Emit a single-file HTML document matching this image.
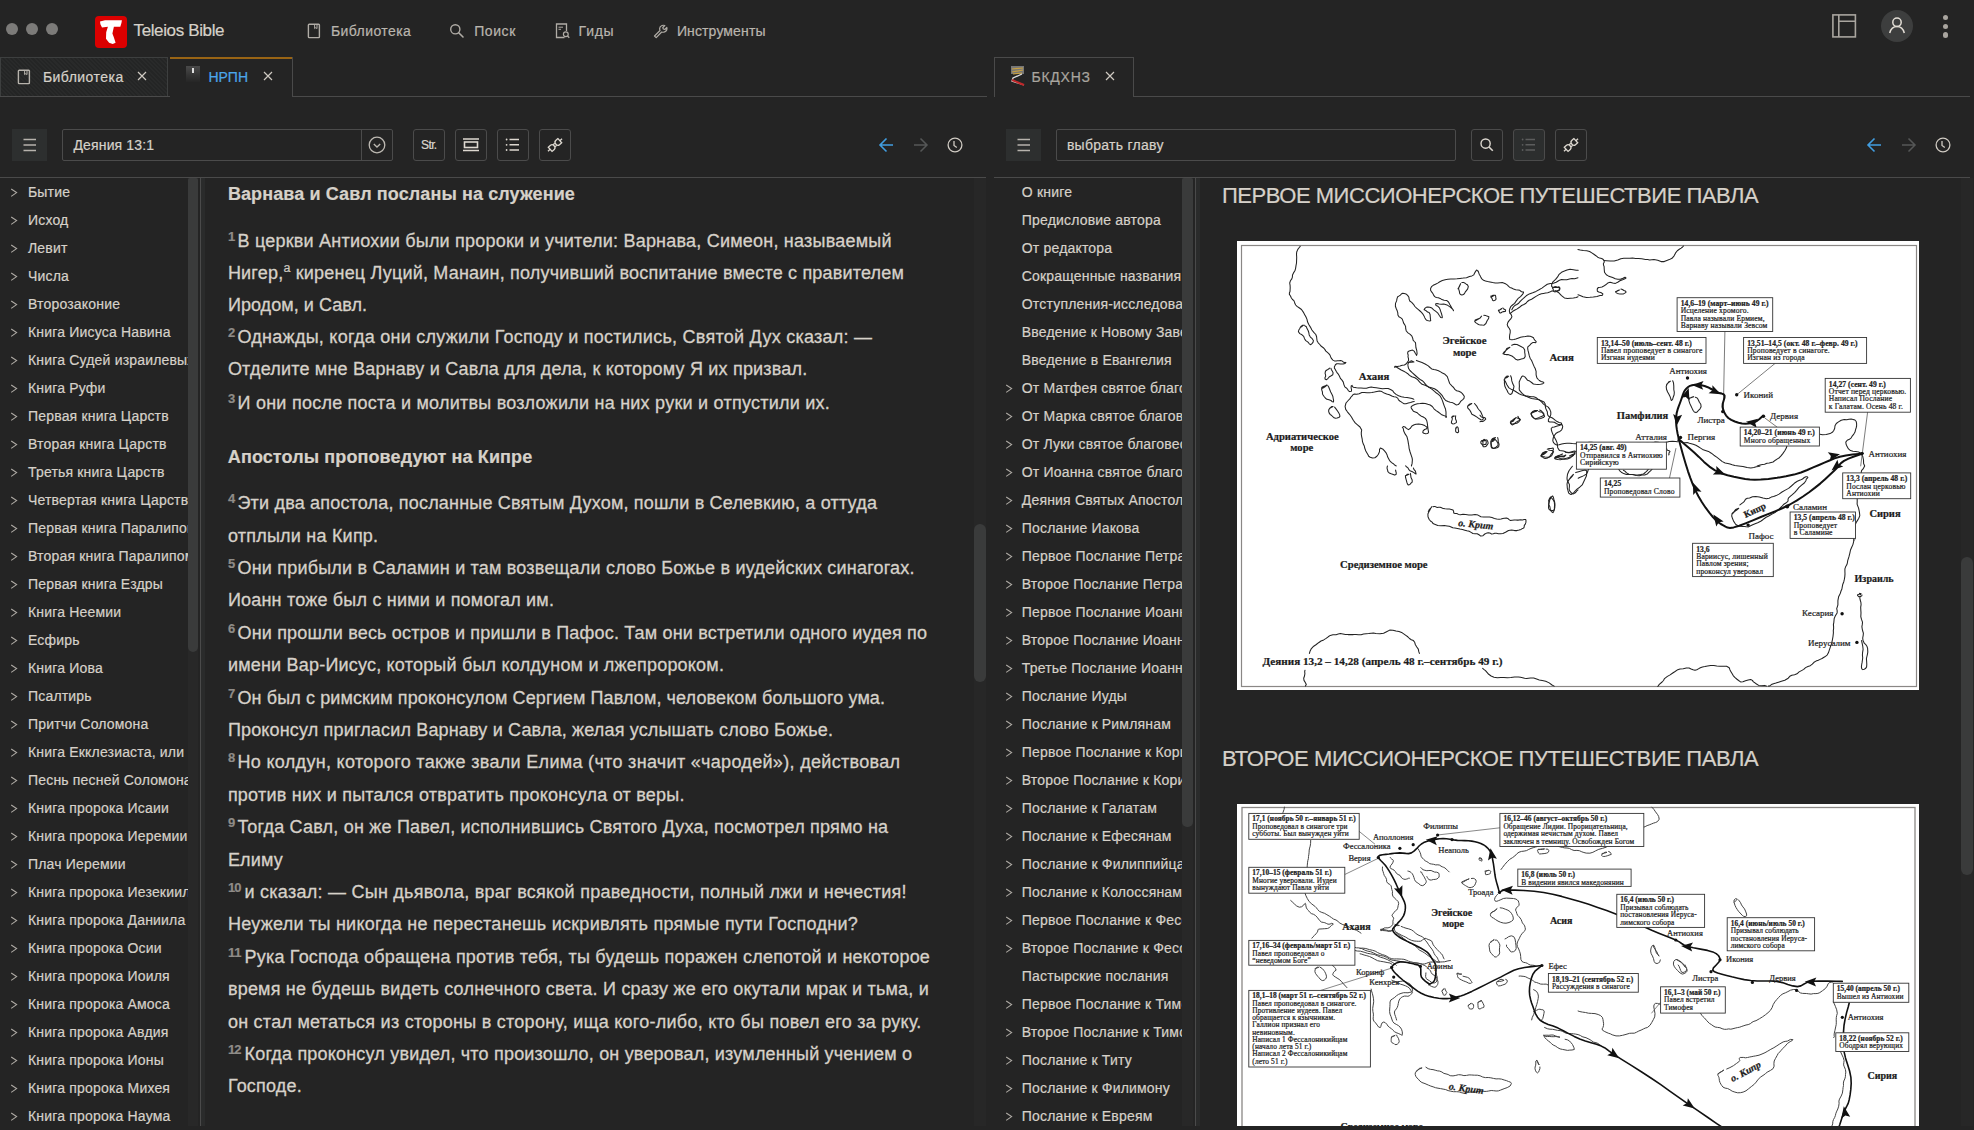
<!DOCTYPE html>
<html><head><meta charset="utf-8"><title>Teleios Bible</title>
<style>
html,body{margin:0;padding:0;width:1974px;height:1130px;overflow:hidden;background:#242424;}
body{position:relative;font-family:"Liberation Sans",sans-serif;}
.t{-webkit-text-stroke:0.2px currentColor;}
</style></head><body>
<div style="position:absolute;left:6px;top:23px;width:12px;height:12px;border-radius:50%;background:#7c7b79"></div><div style="position:absolute;left:26px;top:23px;width:12px;height:12px;border-radius:50%;background:#7c7b79"></div><div style="position:absolute;left:46px;top:23px;width:12px;height:12px;border-radius:50%;background:#7c7b79"></div><div style="position:absolute;left:95px;top:16px;width:32px;height:32px;border-radius:4px;background:#dc0000"></div>
<svg style="position:absolute;left:95px;top:16px" width="32" height="32" viewBox="0 0 32 32"><path d="M5 5.6 L10 4.3 L26.9 4.2 L26.5 6.8 L25.3 10.7 L18.9 10.7 L17.4 17.5 L18.9 21.5 L20.6 26.7 L17.7 27.9 L14.1 26.7 L11 22.7 L11.2 16.3 L12.9 10.7 L7 11.5 L5.4 8.3 Z" fill="#fff"/></svg><svg style="position:absolute;left:307px;top:23px" width="14" height="16" viewBox="0 0 14 16"><rect x="1.4" y="1.2" width="11" height="13.4" rx="0.8" fill="none" stroke="#b0aca6" stroke-width="1.4"/><path d="M7.6 1.2 V5.6 L8.8 4.6 L10 5.6 V1.2" fill="none" stroke="#b0aca6" stroke-width="1"/></svg><svg style="position:absolute;left:449px;top:23px" width="16" height="16" viewBox="0 0 16 16"><circle cx="6.3" cy="6.3" r="4.6" fill="none" stroke="#b0aca6" stroke-width="1.4"/><path d="M9.7 9.7 L14 14" stroke="#b0aca6" stroke-width="1.6" stroke-linecap="round"/></svg><svg style="position:absolute;left:555px;top:23px" width="16" height="16" viewBox="0 0 16 16"><path d="M9.5 14.5 H1.5 V1 H11.5 V8" fill="none" stroke="#b0aca6" stroke-width="1.3"/><path d="M3.5 4.2 H8 M3.5 6.3 H6" stroke="#b0aca6" stroke-width="1"/><circle cx="10.8" cy="11.3" r="2.4" fill="none" stroke="#b0aca6" stroke-width="1.2"/><path d="M12.5 13 L14.3 14.8" stroke="#b0aca6" stroke-width="1.3"/></svg><svg style="position:absolute;left:653px;top:24px" width="15" height="15" viewBox="0 0 15 15"><path d="M1.5 12 L7 6.5 C6.3 4.5 7 2.3 9 1.5 C10 1.1 11 1.2 11.8 1.5 L9.8 3.5 L10.3 5 L11.8 5.5 L13.8 3.5 C14.1 4.6 13.9 6 13 7 C12 8.1 10.3 8.5 8.7 8 L3.2 13.6 Z" fill="none" stroke="#b0aca6" stroke-width="1.2" stroke-linejoin="round"/></svg><svg style="position:absolute;left:1832px;top:14px" width="25" height="24" viewBox="0 0 25 24"><rect x="0.9" y="0.9" width="22.5" height="22" fill="none" stroke="#a9a59f" stroke-width="1.6"/><path d="M6.8 1 V23 M6.8 7.3 H23" stroke="#a9a59f" stroke-width="1.6"/></svg><div style="position:absolute;left:1881px;top:10px;width:32px;height:32px;border-radius:50%;background:#3d3e3e"></div><svg style="position:absolute;left:1881px;top:10px" width="32" height="32" viewBox="0 0 32 32"><circle cx="16" cy="12.3" r="4.2" fill="none" stroke="#e3ded6" stroke-width="1.5"/><path d="M8.7 23 C9.8 19 12.5 16.6 16 16.6 C19.5 16.6 22.2 19 23.3 23" fill="none" stroke="#e3ded6" stroke-width="1.5"/></svg><div style="position:absolute;left:1942.8000000000002px;top:15.299999999999999px;width:5.2px;height:5.2px;border-radius:50%;background:#a9a59f"></div><div style="position:absolute;left:1942.8000000000002px;top:23.9px;width:5.2px;height:5.2px;border-radius:50%;background:#a9a59f"></div><div style="position:absolute;left:1942.8000000000002px;top:32.4px;width:5.2px;height:5.2px;border-radius:50%;background:#a9a59f"></div><div style="position:absolute;left:0;top:96px;width:987px;height:1px;background:#4a4a4a"></div><div style="position:absolute;left:994px;top:96px;width:976px;height:1px;background:#4a4a4a"></div><div style="position:absolute;left:0;top:57px;width:166px;height:38px;border:1px solid #3d3f3f;border-bottom:none;background:repeating-linear-gradient(45deg,#242525 0px,#242525 1.5px,#292a2a 1.5px,#292a2a 3px)"></div><svg style="position:absolute;left:17px;top:69px" width="14" height="16" viewBox="0 0 14 16"><rect x="1.4" y="1.2" width="11" height="13.4" rx="0.8" fill="none" stroke="#b6b2ab" stroke-width="1.4"/><path d="M7.6 1.2 V5.6 L8.8 4.6 L10 5.6 V1.2" fill="none" stroke="#b6b2ab" stroke-width="1"/></svg><svg style="position:absolute;left:137px;top:71px" width="10" height="10" viewBox="0 0 10 10"><path d="M1 1 L9 9 M9 1 L1 9" stroke="#cfcac2" stroke-width="1.2"/></svg><div style="position:absolute;left:170px;top:57px;width:122px;height:40px;background:#242424;border-right:1px solid #4a4a4a"></div><div style="position:absolute;left:170px;top:57px;width:122px;height:2px;background:#996414"></div><div style="position:absolute;left:186px;top:66px;width:14px;height:16px;background:linear-gradient(#4a4a4a,#333 60%,#262626)"></div><div style="position:absolute;left:192px;top:68px;width:2px;height:5px;background:#ddd"></div><svg style="position:absolute;left:263px;top:71px" width="10" height="10" viewBox="0 0 10 10"><path d="M1 1 L9 9 M9 1 L1 9" stroke="#cfcac2" stroke-width="1.2"/></svg><div style="position:absolute;left:994px;top:57px;width:140px;height:40px;background:#242424;border:1px solid #4a4a4a;border-bottom:none;box-sizing:border-box"></div><svg style="position:absolute;left:1010px;top:65px" width="16" height="24" viewBox="0 0 16 24"><rect x="1" y="1" width="13" height="8" fill="#777"/><path d="M2 4 L13 3 M2 7 L13 5 M3 9 L12 8" stroke="#c8a040" stroke-width="1.2"/><path d="M12 9 L3 13 L2 16 L14 20" fill="none" stroke="#ddd" stroke-width="1.3"/><path d="M2 15 L14 20" stroke="#c0282a" stroke-width="2"/></svg><svg style="position:absolute;left:1105px;top:71px" width="10" height="10" viewBox="0 0 10 10"><path d="M1 1 L9 9 M9 1 L1 9" stroke="#cfcac2" stroke-width="1.2"/></svg><div style="position:absolute;left:12px;top:129px;width:35px;height:32px;background:#2d2f2f"></div><svg style="position:absolute;left:12px;top:129px" width="35" height="32" viewBox="0 0 35 32"><path d="M11.5 10.5 H24 M11.5 16 H24 M11.5 21.5 H24" stroke="#b7b3ad" stroke-width="1.5"/></svg><div style="position:absolute;left:62px;top:129px;width:331px;height:32px;border:1px solid #4b4b4b;border-radius:2px;box-sizing:border-box"></div><div style="position:absolute;left:361px;top:129px;width:1px;height:32px;background:#4b4b4b"></div><svg style="position:absolute;left:367px;top:135px" width="20" height="20" viewBox="0 0 20 20"><circle cx="10" cy="10" r="7.8" fill="none" stroke="#bdb9b2" stroke-width="1.3"/><path d="M6.8 9 L10 12 L13.2 9" fill="none" stroke="#bdb9b2" stroke-width="1.3"/></svg><div style="position:absolute;left:413px;top:129px;width:32px;height:32px;border:1px solid #4b4b4b;border-radius:3px;box-sizing:border-box;background:none"></div><div style="position:absolute;left:455px;top:129px;width:32px;height:32px;border:1px solid #4b4b4b;border-radius:3px;box-sizing:border-box;background:none"></div><div style="position:absolute;left:497px;top:129px;width:32px;height:32px;border:1px solid #4b4b4b;border-radius:3px;box-sizing:border-box;background:none"></div><div style="position:absolute;left:539px;top:129px;width:32px;height:32px;border:1px solid #4b4b4b;border-radius:3px;box-sizing:border-box;background:none"></div><svg style="position:absolute;left:455px;top:129px" width="32" height="32" viewBox="0 0 32 32"><path d="M8 10 H24 M8 21.5 H24" stroke="#ddd8d0" stroke-width="1.5"/><rect x="9.5" y="13" width="13" height="5.5" fill="none" stroke="#ddd8d0" stroke-width="1.6"/></svg><svg style="position:absolute;left:497px;top:129px" width="32" height="32" viewBox="0 0 32 32"><path d="M12.5 10.5 H22 M12.5 15.8 H22 M12.5 21 H22" stroke="#ddd8d0" stroke-width="1.4"/><circle cx="9.6" cy="10.5" r="0.9" fill="#ddd8d0"/><circle cx="9.6" cy="15.8" r="0.9" fill="#ddd8d0"/><circle cx="9.6" cy="21" r="0.9" fill="#ddd8d0"/></svg><svg style="position:absolute;left:539px;top:129px" width="32" height="32" viewBox="0 0 32 32"><g fill="none" stroke="#ddd8d0" stroke-width="1.3" transform="rotate(-42 16 16)"><path d="M6.5 16 H9.5"/><path d="M9.5 13.2 H12.5 C14 13.2 14.8 14.5 14.8 16 C14.8 17.5 14 18.8 12.5 18.8 H9.5 Z"/><path d="M14.8 14.6 H17 M14.8 17.4 H17"/><path d="M22.5 13.2 H19.5 C18 13.2 17.2 14.5 17.2 16 C17.2 17.5 18 18.8 19.5 18.8 H22.5 Z"/><path d="M22.5 16 H25.5"/></g></svg><svg style="position:absolute;left:878px;top:137px" width="16" height="16" viewBox="0 0 16 16"><path d="M15 8 H2 M8.5 1.5 L2 8 L8.5 14.5" fill="none" stroke="#419de0" stroke-width="1.6"/></svg><svg style="position:absolute;left:913px;top:137px" width="16" height="16" viewBox="0 0 16 16"><path d="M1 8 H14 M7.5 1.5 L14 8 L7.5 14.5" fill="none" stroke="#555757" stroke-width="1.5"/></svg><svg style="position:absolute;left:947px;top:137px" width="16" height="16" viewBox="0 0 16 16"><circle cx="8" cy="8" r="6.9" fill="none" stroke="#cfcac2" stroke-width="1.3"/><path d="M7 4 V8.4 L9.8 10.6" fill="none" stroke="#cfcac2" stroke-width="1.3"/></svg><div style="position:absolute;left:0;top:177px;width:986px;height:1px;background:#4a4a4a"></div><div style="position:absolute;left:1006px;top:129px;width:35px;height:32px;background:#2d2f2f"></div><svg style="position:absolute;left:1006px;top:129px" width="35" height="32" viewBox="0 0 35 32"><path d="M11.5 10.5 H24 M11.5 16 H24 M11.5 21.5 H24" stroke="#b7b3ad" stroke-width="1.5"/></svg><div style="position:absolute;left:1056px;top:129px;width:400px;height:32px;border:1px solid #4b4b4b;border-radius:2px;box-sizing:border-box"></div><div style="position:absolute;left:1471px;top:129px;width:32px;height:32px;border:1px solid #4b4b4b;border-radius:3px;box-sizing:border-box;background:none"></div><svg style="position:absolute;left:1471px;top:129px" width="32" height="32" viewBox="0 0 32 32"><circle cx="14.6" cy="14.6" r="4.6" fill="none" stroke="#ddd8d0" stroke-width="1.4"/><path d="M18 18 L21.8 21.8" stroke="#ddd8d0" stroke-width="1.6"/></svg><div style="position:absolute;left:1513px;top:129px;width:32px;height:32px;border:1px solid #4b4b4b;border-radius:3px;box-sizing:border-box;background:#2c2e2e"></div><svg style="position:absolute;left:1513px;top:129px" width="32" height="32" viewBox="0 0 32 32"><path d="M12.5 10.5 H22 M12.5 15.8 H22 M12.5 21 H22" stroke="#5c5d5d" stroke-width="1.4"/><circle cx="9.6" cy="10.5" r="0.9" fill="#5c5d5d"/><circle cx="9.6" cy="15.8" r="0.9" fill="#5c5d5d"/><circle cx="9.6" cy="21" r="0.9" fill="#5c5d5d"/></svg><div style="position:absolute;left:1555px;top:129px;width:32px;height:32px;border:1px solid #4b4b4b;border-radius:3px;box-sizing:border-box;background:none"></div><svg style="position:absolute;left:1555px;top:129px" width="32" height="32" viewBox="0 0 32 32"><g fill="none" stroke="#ddd8d0" stroke-width="1.3" transform="rotate(-42 16 16)"><path d="M6.5 16 H9.5"/><path d="M9.5 13.2 H12.5 C14 13.2 14.8 14.5 14.8 16 C14.8 17.5 14 18.8 12.5 18.8 H9.5 Z"/><path d="M14.8 14.6 H17 M14.8 17.4 H17"/><path d="M22.5 13.2 H19.5 C18 13.2 17.2 14.5 17.2 16 C17.2 17.5 18 18.8 19.5 18.8 H22.5 Z"/><path d="M22.5 16 H25.5"/></g></svg><svg style="position:absolute;left:1866px;top:137px" width="16" height="16" viewBox="0 0 16 16"><path d="M15 8 H2 M8.5 1.5 L2 8 L8.5 14.5" fill="none" stroke="#419de0" stroke-width="1.6"/></svg><svg style="position:absolute;left:1901px;top:137px" width="16" height="16" viewBox="0 0 16 16"><path d="M1 8 H14 M7.5 1.5 L14 8 L7.5 14.5" fill="none" stroke="#555757" stroke-width="1.5"/></svg><svg style="position:absolute;left:1935px;top:137px" width="16" height="16" viewBox="0 0 16 16"><circle cx="8" cy="8" r="6.9" fill="none" stroke="#cfcac2" stroke-width="1.3"/><path d="M7 4 V8.4 L9.8 10.6" fill="none" stroke="#cfcac2" stroke-width="1.3"/></svg><div style="position:absolute;left:994px;top:177px;width:976px;height:1px;background:#4a4a4a"></div><div style="position:absolute;left:0;top:178px;width:188px;height:948px;overflow:hidden"><svg style="position:absolute;left:9.7px;top:10.299999999999988px" width="8" height="10" viewBox="0 0 8 10"><path d="M1.2 1 L6.6 4.6 L1.2 8.4" fill="none" stroke="#aeaaa4" stroke-width="1.1"/></svg><svg style="position:absolute;left:9.7px;top:38.29999999999999px" width="8" height="10" viewBox="0 0 8 10"><path d="M1.2 1 L6.6 4.6 L1.2 8.4" fill="none" stroke="#aeaaa4" stroke-width="1.1"/></svg><svg style="position:absolute;left:9.7px;top:66.29999999999998px" width="8" height="10" viewBox="0 0 8 10"><path d="M1.2 1 L6.6 4.6 L1.2 8.4" fill="none" stroke="#aeaaa4" stroke-width="1.1"/></svg><svg style="position:absolute;left:9.7px;top:94.29999999999998px" width="8" height="10" viewBox="0 0 8 10"><path d="M1.2 1 L6.6 4.6 L1.2 8.4" fill="none" stroke="#aeaaa4" stroke-width="1.1"/></svg><svg style="position:absolute;left:9.7px;top:122.29999999999998px" width="8" height="10" viewBox="0 0 8 10"><path d="M1.2 1 L6.6 4.6 L1.2 8.4" fill="none" stroke="#aeaaa4" stroke-width="1.1"/></svg><svg style="position:absolute;left:9.7px;top:150.29999999999998px" width="8" height="10" viewBox="0 0 8 10"><path d="M1.2 1 L6.6 4.6 L1.2 8.4" fill="none" stroke="#aeaaa4" stroke-width="1.1"/></svg><svg style="position:absolute;left:9.7px;top:178.29999999999998px" width="8" height="10" viewBox="0 0 8 10"><path d="M1.2 1 L6.6 4.6 L1.2 8.4" fill="none" stroke="#aeaaa4" stroke-width="1.1"/></svg><svg style="position:absolute;left:9.7px;top:206.29999999999998px" width="8" height="10" viewBox="0 0 8 10"><path d="M1.2 1 L6.6 4.6 L1.2 8.4" fill="none" stroke="#aeaaa4" stroke-width="1.1"/></svg><svg style="position:absolute;left:9.7px;top:234.29999999999998px" width="8" height="10" viewBox="0 0 8 10"><path d="M1.2 1 L6.6 4.6 L1.2 8.4" fill="none" stroke="#aeaaa4" stroke-width="1.1"/></svg><svg style="position:absolute;left:9.7px;top:262.3px" width="8" height="10" viewBox="0 0 8 10"><path d="M1.2 1 L6.6 4.6 L1.2 8.4" fill="none" stroke="#aeaaa4" stroke-width="1.1"/></svg><svg style="position:absolute;left:9.7px;top:290.3px" width="8" height="10" viewBox="0 0 8 10"><path d="M1.2 1 L6.6 4.6 L1.2 8.4" fill="none" stroke="#aeaaa4" stroke-width="1.1"/></svg><svg style="position:absolute;left:9.7px;top:318.3px" width="8" height="10" viewBox="0 0 8 10"><path d="M1.2 1 L6.6 4.6 L1.2 8.4" fill="none" stroke="#aeaaa4" stroke-width="1.1"/></svg><svg style="position:absolute;left:9.7px;top:346.30000000000007px" width="8" height="10" viewBox="0 0 8 10"><path d="M1.2 1 L6.6 4.6 L1.2 8.4" fill="none" stroke="#aeaaa4" stroke-width="1.1"/></svg><svg style="position:absolute;left:9.7px;top:374.30000000000007px" width="8" height="10" viewBox="0 0 8 10"><path d="M1.2 1 L6.6 4.6 L1.2 8.4" fill="none" stroke="#aeaaa4" stroke-width="1.1"/></svg><svg style="position:absolute;left:9.7px;top:402.30000000000007px" width="8" height="10" viewBox="0 0 8 10"><path d="M1.2 1 L6.6 4.6 L1.2 8.4" fill="none" stroke="#aeaaa4" stroke-width="1.1"/></svg><svg style="position:absolute;left:9.7px;top:430.30000000000007px" width="8" height="10" viewBox="0 0 8 10"><path d="M1.2 1 L6.6 4.6 L1.2 8.4" fill="none" stroke="#aeaaa4" stroke-width="1.1"/></svg><svg style="position:absolute;left:9.7px;top:458.30000000000007px" width="8" height="10" viewBox="0 0 8 10"><path d="M1.2 1 L6.6 4.6 L1.2 8.4" fill="none" stroke="#aeaaa4" stroke-width="1.1"/></svg><svg style="position:absolute;left:9.7px;top:486.30000000000007px" width="8" height="10" viewBox="0 0 8 10"><path d="M1.2 1 L6.6 4.6 L1.2 8.4" fill="none" stroke="#aeaaa4" stroke-width="1.1"/></svg><svg style="position:absolute;left:9.7px;top:514.3000000000001px" width="8" height="10" viewBox="0 0 8 10"><path d="M1.2 1 L6.6 4.6 L1.2 8.4" fill="none" stroke="#aeaaa4" stroke-width="1.1"/></svg><svg style="position:absolute;left:9.7px;top:542.3000000000001px" width="8" height="10" viewBox="0 0 8 10"><path d="M1.2 1 L6.6 4.6 L1.2 8.4" fill="none" stroke="#aeaaa4" stroke-width="1.1"/></svg><svg style="position:absolute;left:9.7px;top:570.3000000000001px" width="8" height="10" viewBox="0 0 8 10"><path d="M1.2 1 L6.6 4.6 L1.2 8.4" fill="none" stroke="#aeaaa4" stroke-width="1.1"/></svg><svg style="position:absolute;left:9.7px;top:598.3000000000001px" width="8" height="10" viewBox="0 0 8 10"><path d="M1.2 1 L6.6 4.6 L1.2 8.4" fill="none" stroke="#aeaaa4" stroke-width="1.1"/></svg><svg style="position:absolute;left:9.7px;top:626.3000000000001px" width="8" height="10" viewBox="0 0 8 10"><path d="M1.2 1 L6.6 4.6 L1.2 8.4" fill="none" stroke="#aeaaa4" stroke-width="1.1"/></svg><svg style="position:absolute;left:9.7px;top:654.3000000000001px" width="8" height="10" viewBox="0 0 8 10"><path d="M1.2 1 L6.6 4.6 L1.2 8.4" fill="none" stroke="#aeaaa4" stroke-width="1.1"/></svg><svg style="position:absolute;left:9.7px;top:682.3000000000001px" width="8" height="10" viewBox="0 0 8 10"><path d="M1.2 1 L6.6 4.6 L1.2 8.4" fill="none" stroke="#aeaaa4" stroke-width="1.1"/></svg><svg style="position:absolute;left:9.7px;top:710.3000000000001px" width="8" height="10" viewBox="0 0 8 10"><path d="M1.2 1 L6.6 4.6 L1.2 8.4" fill="none" stroke="#aeaaa4" stroke-width="1.1"/></svg><svg style="position:absolute;left:9.7px;top:738.3000000000001px" width="8" height="10" viewBox="0 0 8 10"><path d="M1.2 1 L6.6 4.6 L1.2 8.4" fill="none" stroke="#aeaaa4" stroke-width="1.1"/></svg><svg style="position:absolute;left:9.7px;top:766.3000000000001px" width="8" height="10" viewBox="0 0 8 10"><path d="M1.2 1 L6.6 4.6 L1.2 8.4" fill="none" stroke="#aeaaa4" stroke-width="1.1"/></svg><svg style="position:absolute;left:9.7px;top:794.3000000000001px" width="8" height="10" viewBox="0 0 8 10"><path d="M1.2 1 L6.6 4.6 L1.2 8.4" fill="none" stroke="#aeaaa4" stroke-width="1.1"/></svg><svg style="position:absolute;left:9.7px;top:822.3000000000001px" width="8" height="10" viewBox="0 0 8 10"><path d="M1.2 1 L6.6 4.6 L1.2 8.4" fill="none" stroke="#aeaaa4" stroke-width="1.1"/></svg><svg style="position:absolute;left:9.7px;top:850.3000000000001px" width="8" height="10" viewBox="0 0 8 10"><path d="M1.2 1 L6.6 4.6 L1.2 8.4" fill="none" stroke="#aeaaa4" stroke-width="1.1"/></svg><svg style="position:absolute;left:9.7px;top:878.3000000000001px" width="8" height="10" viewBox="0 0 8 10"><path d="M1.2 1 L6.6 4.6 L1.2 8.4" fill="none" stroke="#aeaaa4" stroke-width="1.1"/></svg><svg style="position:absolute;left:9.7px;top:906.3000000000001px" width="8" height="10" viewBox="0 0 8 10"><path d="M1.2 1 L6.6 4.6 L1.2 8.4" fill="none" stroke="#aeaaa4" stroke-width="1.1"/></svg><svg style="position:absolute;left:9.7px;top:934.3000000000001px" width="8" height="10" viewBox="0 0 8 10"><path d="M1.2 1 L6.6 4.6 L1.2 8.4" fill="none" stroke="#aeaaa4" stroke-width="1.1"/></svg><div class="t" style="position:absolute;left:28.00px;top:6.83px;font-size:14px;line-height:15.64px;color:#d6d1c9;font-weight:400;letter-spacing:0.180px;white-space:pre;">Бытие</div><div class="t" style="position:absolute;left:28.00px;top:34.83px;font-size:14px;line-height:15.64px;color:#d6d1c9;font-weight:400;letter-spacing:0.180px;white-space:pre;">Исход</div><div class="t" style="position:absolute;left:28.00px;top:62.83px;font-size:14px;line-height:15.64px;color:#d6d1c9;font-weight:400;letter-spacing:0.180px;white-space:pre;">Левит</div><div class="t" style="position:absolute;left:28.00px;top:90.83px;font-size:14px;line-height:15.64px;color:#d6d1c9;font-weight:400;letter-spacing:0.180px;white-space:pre;">Числа</div><div class="t" style="position:absolute;left:28.00px;top:118.83px;font-size:14px;line-height:15.64px;color:#d6d1c9;font-weight:400;letter-spacing:0.180px;white-space:pre;">Второзаконие</div><div class="t" style="position:absolute;left:28.00px;top:146.83px;font-size:14px;line-height:15.64px;color:#d6d1c9;font-weight:400;letter-spacing:0.180px;white-space:pre;">Книга Иисуса Навина</div><div class="t" style="position:absolute;left:28.00px;top:174.83px;font-size:14px;line-height:15.64px;color:#d6d1c9;font-weight:400;letter-spacing:0.180px;white-space:pre;">Книга Судей израилевых</div><div class="t" style="position:absolute;left:28.00px;top:202.83px;font-size:14px;line-height:15.64px;color:#d6d1c9;font-weight:400;letter-spacing:0.180px;white-space:pre;">Книга Руфи</div><div class="t" style="position:absolute;left:28.00px;top:230.83px;font-size:14px;line-height:15.64px;color:#d6d1c9;font-weight:400;letter-spacing:0.180px;white-space:pre;">Первая книга Царств</div><div class="t" style="position:absolute;left:28.00px;top:258.83px;font-size:14px;line-height:15.64px;color:#d6d1c9;font-weight:400;letter-spacing:0.180px;white-space:pre;">Вторая книга Царств</div><div class="t" style="position:absolute;left:28.00px;top:286.83px;font-size:14px;line-height:15.64px;color:#d6d1c9;font-weight:400;letter-spacing:0.180px;white-space:pre;">Третья книга Царств</div><div class="t" style="position:absolute;left:28.00px;top:314.83px;font-size:14px;line-height:15.64px;color:#d6d1c9;font-weight:400;letter-spacing:0.180px;white-space:pre;">Четвертая книга Царств</div><div class="t" style="position:absolute;left:28.00px;top:342.83px;font-size:14px;line-height:15.64px;color:#d6d1c9;font-weight:400;letter-spacing:0.180px;white-space:pre;">Первая книга Паралипоменон</div><div class="t" style="position:absolute;left:28.00px;top:370.83px;font-size:14px;line-height:15.64px;color:#d6d1c9;font-weight:400;letter-spacing:0.180px;white-space:pre;">Вторая книга Паралипоменон</div><div class="t" style="position:absolute;left:28.00px;top:398.83px;font-size:14px;line-height:15.64px;color:#d6d1c9;font-weight:400;letter-spacing:0.180px;white-space:pre;">Первая книга Ездры</div><div class="t" style="position:absolute;left:28.00px;top:426.83px;font-size:14px;line-height:15.64px;color:#d6d1c9;font-weight:400;letter-spacing:0.180px;white-space:pre;">Книга Неемии</div><div class="t" style="position:absolute;left:28.00px;top:454.83px;font-size:14px;line-height:15.64px;color:#d6d1c9;font-weight:400;letter-spacing:0.180px;white-space:pre;">Есфирь</div><div class="t" style="position:absolute;left:28.00px;top:482.83px;font-size:14px;line-height:15.64px;color:#d6d1c9;font-weight:400;letter-spacing:0.180px;white-space:pre;">Книга Иова</div><div class="t" style="position:absolute;left:28.00px;top:510.83px;font-size:14px;line-height:15.64px;color:#d6d1c9;font-weight:400;letter-spacing:0.180px;white-space:pre;">Псалтирь</div><div class="t" style="position:absolute;left:28.00px;top:538.83px;font-size:14px;line-height:15.64px;color:#d6d1c9;font-weight:400;letter-spacing:0.180px;white-space:pre;">Притчи Соломона</div><div class="t" style="position:absolute;left:28.00px;top:566.83px;font-size:14px;line-height:15.64px;color:#d6d1c9;font-weight:400;letter-spacing:0.180px;white-space:pre;">Книга Екклезиаста, или Проповедника</div><div class="t" style="position:absolute;left:28.00px;top:594.83px;font-size:14px;line-height:15.64px;color:#d6d1c9;font-weight:400;letter-spacing:0.180px;white-space:pre;">Песнь песней Соломона</div><div class="t" style="position:absolute;left:28.00px;top:622.83px;font-size:14px;line-height:15.64px;color:#d6d1c9;font-weight:400;letter-spacing:0.180px;white-space:pre;">Книга пророка Исаии</div><div class="t" style="position:absolute;left:28.00px;top:650.83px;font-size:14px;line-height:15.64px;color:#d6d1c9;font-weight:400;letter-spacing:0.180px;white-space:pre;">Книга пророка Иеремии</div><div class="t" style="position:absolute;left:28.00px;top:678.83px;font-size:14px;line-height:15.64px;color:#d6d1c9;font-weight:400;letter-spacing:0.180px;white-space:pre;">Плач Иеремии</div><div class="t" style="position:absolute;left:28.00px;top:706.83px;font-size:14px;line-height:15.64px;color:#d6d1c9;font-weight:400;letter-spacing:0.180px;white-space:pre;">Книга пророка Иезекииля</div><div class="t" style="position:absolute;left:28.00px;top:734.83px;font-size:14px;line-height:15.64px;color:#d6d1c9;font-weight:400;letter-spacing:0.180px;white-space:pre;">Книга пророка Даниила</div><div class="t" style="position:absolute;left:28.00px;top:762.83px;font-size:14px;line-height:15.64px;color:#d6d1c9;font-weight:400;letter-spacing:0.180px;white-space:pre;">Книга пророка Осии</div><div class="t" style="position:absolute;left:28.00px;top:790.83px;font-size:14px;line-height:15.64px;color:#d6d1c9;font-weight:400;letter-spacing:0.180px;white-space:pre;">Книга пророка Иоиля</div><div class="t" style="position:absolute;left:28.00px;top:818.83px;font-size:14px;line-height:15.64px;color:#d6d1c9;font-weight:400;letter-spacing:0.180px;white-space:pre;">Книга пророка Амоса</div><div class="t" style="position:absolute;left:28.00px;top:846.83px;font-size:14px;line-height:15.64px;color:#d6d1c9;font-weight:400;letter-spacing:0.180px;white-space:pre;">Книга пророка Авдия</div><div class="t" style="position:absolute;left:28.00px;top:874.83px;font-size:14px;line-height:15.64px;color:#d6d1c9;font-weight:400;letter-spacing:0.180px;white-space:pre;">Книга пророка Ионы</div><div class="t" style="position:absolute;left:28.00px;top:902.83px;font-size:14px;line-height:15.64px;color:#d6d1c9;font-weight:400;letter-spacing:0.180px;white-space:pre;">Книга пророка Михея</div><div class="t" style="position:absolute;left:28.00px;top:930.83px;font-size:14px;line-height:15.64px;color:#d6d1c9;font-weight:400;letter-spacing:0.180px;white-space:pre;">Книга пророка Наума</div></div><div style="position:absolute;left:188px;top:178px;width:10px;height:948px;background:#282828"></div><div style="position:absolute;left:188px;top:178px;width:10px;height:474px;border-radius:2px 2px 5px 5px;background:#3a3b3b"></div><div style="position:absolute;left:200px;top:178px;width:1px;height:948px;background:#4a4a4a"></div><div style="position:absolute;left:201px;top:178px;width:4px;height:948px;background:#2a2b2b"></div><div style="position:absolute;left:974px;top:178px;width:12px;height:948px;background:#272727"></div><div style="position:absolute;left:974px;top:524px;width:12px;height:158px;border-radius:6px;background:#3a3b3b"></div><div style="position:absolute;left:994px;top:178px;width:188px;height:948px;overflow:hidden"><svg style="position:absolute;left:10.7px;top:206.29999999999998px" width="8" height="10" viewBox="0 0 8 10"><path d="M1.2 1 L6.6 4.6 L1.2 8.4" fill="none" stroke="#aeaaa4" stroke-width="1.1"/></svg><svg style="position:absolute;left:10.7px;top:234.29999999999998px" width="8" height="10" viewBox="0 0 8 10"><path d="M1.2 1 L6.6 4.6 L1.2 8.4" fill="none" stroke="#aeaaa4" stroke-width="1.1"/></svg><svg style="position:absolute;left:10.7px;top:262.3px" width="8" height="10" viewBox="0 0 8 10"><path d="M1.2 1 L6.6 4.6 L1.2 8.4" fill="none" stroke="#aeaaa4" stroke-width="1.1"/></svg><svg style="position:absolute;left:10.7px;top:290.3px" width="8" height="10" viewBox="0 0 8 10"><path d="M1.2 1 L6.6 4.6 L1.2 8.4" fill="none" stroke="#aeaaa4" stroke-width="1.1"/></svg><svg style="position:absolute;left:10.7px;top:318.3px" width="8" height="10" viewBox="0 0 8 10"><path d="M1.2 1 L6.6 4.6 L1.2 8.4" fill="none" stroke="#aeaaa4" stroke-width="1.1"/></svg><svg style="position:absolute;left:10.7px;top:346.30000000000007px" width="8" height="10" viewBox="0 0 8 10"><path d="M1.2 1 L6.6 4.6 L1.2 8.4" fill="none" stroke="#aeaaa4" stroke-width="1.1"/></svg><svg style="position:absolute;left:10.7px;top:374.30000000000007px" width="8" height="10" viewBox="0 0 8 10"><path d="M1.2 1 L6.6 4.6 L1.2 8.4" fill="none" stroke="#aeaaa4" stroke-width="1.1"/></svg><svg style="position:absolute;left:10.7px;top:402.30000000000007px" width="8" height="10" viewBox="0 0 8 10"><path d="M1.2 1 L6.6 4.6 L1.2 8.4" fill="none" stroke="#aeaaa4" stroke-width="1.1"/></svg><svg style="position:absolute;left:10.7px;top:430.30000000000007px" width="8" height="10" viewBox="0 0 8 10"><path d="M1.2 1 L6.6 4.6 L1.2 8.4" fill="none" stroke="#aeaaa4" stroke-width="1.1"/></svg><svg style="position:absolute;left:10.7px;top:458.30000000000007px" width="8" height="10" viewBox="0 0 8 10"><path d="M1.2 1 L6.6 4.6 L1.2 8.4" fill="none" stroke="#aeaaa4" stroke-width="1.1"/></svg><svg style="position:absolute;left:10.7px;top:486.30000000000007px" width="8" height="10" viewBox="0 0 8 10"><path d="M1.2 1 L6.6 4.6 L1.2 8.4" fill="none" stroke="#aeaaa4" stroke-width="1.1"/></svg><svg style="position:absolute;left:10.7px;top:514.3000000000001px" width="8" height="10" viewBox="0 0 8 10"><path d="M1.2 1 L6.6 4.6 L1.2 8.4" fill="none" stroke="#aeaaa4" stroke-width="1.1"/></svg><svg style="position:absolute;left:10.7px;top:542.3000000000001px" width="8" height="10" viewBox="0 0 8 10"><path d="M1.2 1 L6.6 4.6 L1.2 8.4" fill="none" stroke="#aeaaa4" stroke-width="1.1"/></svg><svg style="position:absolute;left:10.7px;top:570.3000000000001px" width="8" height="10" viewBox="0 0 8 10"><path d="M1.2 1 L6.6 4.6 L1.2 8.4" fill="none" stroke="#aeaaa4" stroke-width="1.1"/></svg><svg style="position:absolute;left:10.7px;top:598.3000000000001px" width="8" height="10" viewBox="0 0 8 10"><path d="M1.2 1 L6.6 4.6 L1.2 8.4" fill="none" stroke="#aeaaa4" stroke-width="1.1"/></svg><svg style="position:absolute;left:10.7px;top:626.3000000000001px" width="8" height="10" viewBox="0 0 8 10"><path d="M1.2 1 L6.6 4.6 L1.2 8.4" fill="none" stroke="#aeaaa4" stroke-width="1.1"/></svg><svg style="position:absolute;left:10.7px;top:654.3000000000001px" width="8" height="10" viewBox="0 0 8 10"><path d="M1.2 1 L6.6 4.6 L1.2 8.4" fill="none" stroke="#aeaaa4" stroke-width="1.1"/></svg><svg style="position:absolute;left:10.7px;top:682.3000000000001px" width="8" height="10" viewBox="0 0 8 10"><path d="M1.2 1 L6.6 4.6 L1.2 8.4" fill="none" stroke="#aeaaa4" stroke-width="1.1"/></svg><svg style="position:absolute;left:10.7px;top:710.3000000000001px" width="8" height="10" viewBox="0 0 8 10"><path d="M1.2 1 L6.6 4.6 L1.2 8.4" fill="none" stroke="#aeaaa4" stroke-width="1.1"/></svg><svg style="position:absolute;left:10.7px;top:738.3000000000001px" width="8" height="10" viewBox="0 0 8 10"><path d="M1.2 1 L6.6 4.6 L1.2 8.4" fill="none" stroke="#aeaaa4" stroke-width="1.1"/></svg><svg style="position:absolute;left:10.7px;top:766.3000000000001px" width="8" height="10" viewBox="0 0 8 10"><path d="M1.2 1 L6.6 4.6 L1.2 8.4" fill="none" stroke="#aeaaa4" stroke-width="1.1"/></svg><svg style="position:absolute;left:10.7px;top:822.3000000000001px" width="8" height="10" viewBox="0 0 8 10"><path d="M1.2 1 L6.6 4.6 L1.2 8.4" fill="none" stroke="#aeaaa4" stroke-width="1.1"/></svg><svg style="position:absolute;left:10.7px;top:850.3000000000001px" width="8" height="10" viewBox="0 0 8 10"><path d="M1.2 1 L6.6 4.6 L1.2 8.4" fill="none" stroke="#aeaaa4" stroke-width="1.1"/></svg><svg style="position:absolute;left:10.7px;top:878.3000000000001px" width="8" height="10" viewBox="0 0 8 10"><path d="M1.2 1 L6.6 4.6 L1.2 8.4" fill="none" stroke="#aeaaa4" stroke-width="1.1"/></svg><svg style="position:absolute;left:10.7px;top:906.3000000000001px" width="8" height="10" viewBox="0 0 8 10"><path d="M1.2 1 L6.6 4.6 L1.2 8.4" fill="none" stroke="#aeaaa4" stroke-width="1.1"/></svg><svg style="position:absolute;left:10.7px;top:934.3000000000001px" width="8" height="10" viewBox="0 0 8 10"><path d="M1.2 1 L6.6 4.6 L1.2 8.4" fill="none" stroke="#aeaaa4" stroke-width="1.1"/></svg><div class="t" style="position:absolute;left:27.80px;top:6.83px;font-size:14px;line-height:15.64px;color:#d6d1c9;font-weight:400;letter-spacing:0.180px;white-space:pre;">О книге</div><div class="t" style="position:absolute;left:27.80px;top:34.83px;font-size:14px;line-height:15.64px;color:#d6d1c9;font-weight:400;letter-spacing:0.180px;white-space:pre;">Предисловие автора</div><div class="t" style="position:absolute;left:27.80px;top:62.83px;font-size:14px;line-height:15.64px;color:#d6d1c9;font-weight:400;letter-spacing:0.180px;white-space:pre;">От редактора</div><div class="t" style="position:absolute;left:27.80px;top:90.83px;font-size:14px;line-height:15.64px;color:#d6d1c9;font-weight:400;letter-spacing:0.180px;white-space:pre;">Сокращенные названия</div><div class="t" style="position:absolute;left:27.80px;top:118.83px;font-size:14px;line-height:15.64px;color:#d6d1c9;font-weight:400;letter-spacing:0.180px;white-space:pre;">Отступления-исследования</div><div class="t" style="position:absolute;left:27.80px;top:146.83px;font-size:14px;line-height:15.64px;color:#d6d1c9;font-weight:400;letter-spacing:0.180px;white-space:pre;">Введение к Новому Завету</div><div class="t" style="position:absolute;left:27.80px;top:174.83px;font-size:14px;line-height:15.64px;color:#d6d1c9;font-weight:400;letter-spacing:0.180px;white-space:pre;">Введение в Евангелия</div><div class="t" style="position:absolute;left:27.80px;top:202.83px;font-size:14px;line-height:15.64px;color:#d6d1c9;font-weight:400;letter-spacing:0.180px;white-space:pre;">От Матфея святое благовествование</div><div class="t" style="position:absolute;left:27.80px;top:230.83px;font-size:14px;line-height:15.64px;color:#d6d1c9;font-weight:400;letter-spacing:0.180px;white-space:pre;">От Марка святое благовествование</div><div class="t" style="position:absolute;left:27.80px;top:258.83px;font-size:14px;line-height:15.64px;color:#d6d1c9;font-weight:400;letter-spacing:0.180px;white-space:pre;">От Луки святое благовествование</div><div class="t" style="position:absolute;left:27.80px;top:286.83px;font-size:14px;line-height:15.64px;color:#d6d1c9;font-weight:400;letter-spacing:0.180px;white-space:pre;">От Иоанна святое благовествование</div><div class="t" style="position:absolute;left:27.80px;top:314.83px;font-size:14px;line-height:15.64px;color:#d6d1c9;font-weight:400;letter-spacing:0.180px;white-space:pre;">Деяния Святых Апостолов</div><div class="t" style="position:absolute;left:27.80px;top:342.83px;font-size:14px;line-height:15.64px;color:#d6d1c9;font-weight:400;letter-spacing:0.180px;white-space:pre;">Послание Иакова</div><div class="t" style="position:absolute;left:27.80px;top:370.83px;font-size:14px;line-height:15.64px;color:#d6d1c9;font-weight:400;letter-spacing:0.180px;white-space:pre;">Первое Послание Петра</div><div class="t" style="position:absolute;left:27.80px;top:398.83px;font-size:14px;line-height:15.64px;color:#d6d1c9;font-weight:400;letter-spacing:0.180px;white-space:pre;">Второе Послание Петра</div><div class="t" style="position:absolute;left:27.80px;top:426.83px;font-size:14px;line-height:15.64px;color:#d6d1c9;font-weight:400;letter-spacing:0.180px;white-space:pre;">Первое Послание Иоанна</div><div class="t" style="position:absolute;left:27.80px;top:454.83px;font-size:14px;line-height:15.64px;color:#d6d1c9;font-weight:400;letter-spacing:0.180px;white-space:pre;">Второе Послание Иоанна</div><div class="t" style="position:absolute;left:27.80px;top:482.83px;font-size:14px;line-height:15.64px;color:#d6d1c9;font-weight:400;letter-spacing:0.180px;white-space:pre;">Третье Послание Иоанна</div><div class="t" style="position:absolute;left:27.80px;top:510.83px;font-size:14px;line-height:15.64px;color:#d6d1c9;font-weight:400;letter-spacing:0.180px;white-space:pre;">Послание Иуды</div><div class="t" style="position:absolute;left:27.80px;top:538.83px;font-size:14px;line-height:15.64px;color:#d6d1c9;font-weight:400;letter-spacing:0.180px;white-space:pre;">Послание к Римлянам</div><div class="t" style="position:absolute;left:27.80px;top:566.83px;font-size:14px;line-height:15.64px;color:#d6d1c9;font-weight:400;letter-spacing:0.180px;white-space:pre;">Первое Послание к Коринфянам</div><div class="t" style="position:absolute;left:27.80px;top:594.83px;font-size:14px;line-height:15.64px;color:#d6d1c9;font-weight:400;letter-spacing:0.180px;white-space:pre;">Второе Послание к Коринфянам</div><div class="t" style="position:absolute;left:27.80px;top:622.83px;font-size:14px;line-height:15.64px;color:#d6d1c9;font-weight:400;letter-spacing:0.180px;white-space:pre;">Послание к Галатам</div><div class="t" style="position:absolute;left:27.80px;top:650.83px;font-size:14px;line-height:15.64px;color:#d6d1c9;font-weight:400;letter-spacing:0.180px;white-space:pre;">Послание к Ефесянам</div><div class="t" style="position:absolute;left:27.80px;top:678.83px;font-size:14px;line-height:15.64px;color:#d6d1c9;font-weight:400;letter-spacing:0.180px;white-space:pre;">Послание к Филиппийцам</div><div class="t" style="position:absolute;left:27.80px;top:706.83px;font-size:14px;line-height:15.64px;color:#d6d1c9;font-weight:400;letter-spacing:0.180px;white-space:pre;">Послание к Колоссянам</div><div class="t" style="position:absolute;left:27.80px;top:734.83px;font-size:14px;line-height:15.64px;color:#d6d1c9;font-weight:400;letter-spacing:0.180px;white-space:pre;">Первое Послание к Фессалоникийцам</div><div class="t" style="position:absolute;left:27.80px;top:762.83px;font-size:14px;line-height:15.64px;color:#d6d1c9;font-weight:400;letter-spacing:0.180px;white-space:pre;">Второе Послание к Фессалоникийцам</div><div class="t" style="position:absolute;left:27.80px;top:790.83px;font-size:14px;line-height:15.64px;color:#d6d1c9;font-weight:400;letter-spacing:0.180px;white-space:pre;">Пастырские послания</div><div class="t" style="position:absolute;left:27.80px;top:818.83px;font-size:14px;line-height:15.64px;color:#d6d1c9;font-weight:400;letter-spacing:0.180px;white-space:pre;">Первое Послание к Тимофею</div><div class="t" style="position:absolute;left:27.80px;top:846.83px;font-size:14px;line-height:15.64px;color:#d6d1c9;font-weight:400;letter-spacing:0.180px;white-space:pre;">Второе Послание к Тимофею</div><div class="t" style="position:absolute;left:27.80px;top:874.83px;font-size:14px;line-height:15.64px;color:#d6d1c9;font-weight:400;letter-spacing:0.180px;white-space:pre;">Послание к Титу</div><div class="t" style="position:absolute;left:27.80px;top:902.83px;font-size:14px;line-height:15.64px;color:#d6d1c9;font-weight:400;letter-spacing:0.180px;white-space:pre;">Послание к Филимону</div><div class="t" style="position:absolute;left:27.80px;top:930.83px;font-size:14px;line-height:15.64px;color:#d6d1c9;font-weight:400;letter-spacing:0.180px;white-space:pre;">Послание к Евреям</div></div><div style="position:absolute;left:1182px;top:178px;width:11px;height:948px;background:#282828"></div><div style="position:absolute;left:1182px;top:178px;width:11px;height:649px;border-radius:2px 2px 5px 5px;background:#3a3b3b"></div><div style="position:absolute;left:1195px;top:178px;width:1px;height:948px;background:#4a4a4a"></div><div style="position:absolute;left:1196px;top:178px;width:4px;height:948px;background:#2a2b2b"></div><div style="position:absolute;left:1961px;top:178px;width:12px;height:948px;background:#272727"></div><div style="position:absolute;left:1961px;top:557px;width:12px;height:318px;border-radius:6px;background:#3a3b3b"></div><div style="position:absolute;left:1237px;top:241px;width:682px;height:449px;background:#fff;overflow:hidden"><svg width="682" height="449" viewBox="0 0 682 449" style="position:absolute;left:0;top:0;font-family:'Liberation Serif',serif"><style>text{stroke:#222;stroke-width:0.22px}</style><defs><filter id="wob1" x="-5%" y="-5%" width="110%" height="110%"><feTurbulence type="fractalNoise" baseFrequency="0.35" numOctaves="2" seed="3"/><feDisplacementMap in="SourceGraphic" scale="2.2"/></filter></defs><rect x="4.5" y="4.5" width="675" height="441" fill="none" stroke="#8a8785" stroke-width="1.2"/><g><path d="M63.2 5.4 L62.5 6.3 L61.4 7.5 L60.5 9.1 L59.7 11.0 L59.5 13.4 L59.7 16.2 L59.6 19.2 L59.5 22.0 L59.0 24.7 L58.6 27.3 L57.9 29.8 L56.5 31.9 L55.5 33.9 L55.4 36.1 L54.8 37.9 L53.4 39.8 L52.7 42.0 L53.1 44.4 L53.2 46.7 L53.1 48.7 L53.0 50.5 L52.4 52.0 L52.4 53.4 L53.0 54.2 L53.6 55.3 L54.4 57.0 L55.5 58.5 L56.9 59.6 L57.5 61.1 L57.9 62.6 L58.7 64.0 L60.0 65.4 L62.1 66.8 L64.5 68.5 L66.3 71.1 L67.7 73.7 L69.0 76.0 L70.0 78.4 L70.6 81.1 L71.8 83.5 L73.4 86.1 L74.9 89.0 L76.8 91.4 L78.8 93.5 L79.6 95.7 L79.8 97.8 L80.1 100.0 L81.2 101.8 L82.8 103.5 L84.3 105.3 L86.3 106.7 L87.8 108.4 L88.9 110.1 L90.4 111.4 L91.8 112.7 L93.0 114.1 L93.7 116.0 L94.6 117.7 L95.9 119.1 L97.4 119.9 L99.0 119.9 L100.5 119.8 L102.0 119.7 L103.5 119.6 L105.2 120.1 L106.8 121.3 L107.9 121.8 L108.9 121.4 L108.1 122.4 L106.0 123.0 L103.5 122.9 L101.3 122.7 L99.7 122.8 L98.4 123.7 L97.8 125.0 L97.4 125.8 L97.4 127.1 L98.3 128.5 L99.2 130.3 L100.2 131.9 L101.5 133.4 L102.5 135.3 L103.4 137.4 L105.0 139.1 L106.3 141.1 L106.9 143.6 L107.8 145.8 L109.4 147.0 L110.5 148.2 L111.3 149.6 L112.6 150.6 L114.4 150.2 L114.6 148.8 L114.1 146.9 L114.2 145.0 L115.1 144.3 L115.2 145.2 L116.2 146.2 L118.1 146.5 L119.5 146.8 L121.5 147.0 L124.0 147.1 L126.8 147.3 L129.4 147.3 L131.8 146.5 L134.2 146.1 L136.7 146.4 L139.3 146.7 L142.3 147.2 L145.5 147.7 L148.6 147.6 L151.2 147.5 L152.9 148.3 L154.4 149.0 L155.8 149.9 L157.0 151.7 L159.0 153.4 L161.6 154.8 L164.4 155.8 L167.2 156.3 L170.0 156.5 L172.7 157.0 L175.1 157.6 L176.8 158.3" fill="none" stroke="#222" stroke-width="1.05" stroke-linejoin="round" stroke-linecap="round"/><path d="M177.2 160.4 L175.7 160.7 L173.6 161.4 L171.3 162.1 L169.0 162.8 L167.1 162.7 L165.6 161.9 L164.2 160.9 L162.8 160.0 L161.5 158.8 L160.7 157.1 L159.1 156.1 L157.0 155.8 L154.8 155.0 L152.4 153.8 L149.7 153.0 L147.2 152.1 L144.9 150.6 L142.4 150.0 L139.9 150.5 L137.4 151.1 L134.9 151.6 L132.5 151.8 L130.0 151.7 L127.4 151.5 L124.8 151.6 L122.2 152.7 L119.8 153.2 L117.3 153.0 L115.8 153.9 L114.9 155.1 L114.0 156.0 L113.0 157.6 L111.2 159.5 L109.0 162.0 L108.1 165.3 L108.7 168.4 L110.4 170.8 L112.5 173.3 L114.6 176.2 L116.3 179.3 L118.2 181.9 L120.5 183.9 L123.0 186.0 L124.7 189.0 L124.3 191.3 L124.3 193.4 L124.7 195.8 L125.2 198.2 L125.5 200.7 L126.3 203.1 L127.3 205.0 L127.7 207.0 L128.8 210.0 L130.1 212.2 L131.0 213.8 L131.7 215.2 L133.2 216.2 L135.5 217.0 L137.9 216.7 L139.9 215.3 L141.4 213.3 L142.5 210.6 L142.5 208.6 L143.4 207.0 L146.1 208.3 L147.5 209.9 L148.9 211.6 L150.0 213.7 L150.7 216.1 L152.6 219.6 L154.6 221.6 L156.7 223.0 L158.0 224.3 L159.3 224.9" fill="none" stroke="#222" stroke-width="1.05" stroke-linejoin="round" stroke-linecap="round"/><path d="M174.4 225.0 L175.1 222.4 L175.4 218.8 L175.1 216.8 L174.4 214.8 L173.1 211.0 L172.1 207.3 L171.9 205.2 L171.5 203.2 L170.9 199.3 L170.0 195.8 L168.1 192.9 L166.7 190.0 L166.3 187.5 L165.3 186.5 L166.3 185.5 L168.0 185.9 L169.4 187.4 L171.5 188.6 L173.4 187.3 L174.9 185.0 L177.2 183.7 L179.0 183.2 L181.7 182.9 L184.9 183.4 L187.7 184.6 L190.0 186.1 L189.6 187.8 L187.6 188.5 L186.1 189.9 L185.8 191.5 L186.8 192.3 L188.5 192.7 L190.6 192.6 L191.6 191.2 L191.1 188.8 L190.7 185.6 L190.3 182.2 L189.7 179.5 L188.4 177.4 L186.3 176.0 L183.9 174.9 L182.0 173.5 L180.3 171.8 L178.3 171.0 L176.4 170.2 L175.5 168.9 L174.8 167.9 L174.2 167.0 L174.1 166.4 L174.3 165.5 L175.7 164.6 L177.9 163.6 L180.5 162.7 L183.1 162.5 L185.6 162.2 L188.3 162.4 L190.8 163.3 L193.2 164.0 L195.3 165.5 L197.0 167.8 L199.1 169.6 L201.2 171.0 L203.0 172.4 L204.8 173.8 L206.6 174.6 L208.2 174.9 L209.0 175.4 L209.4 175.8 L209.3 176.0 L209.0 176.2" fill="none" stroke="#222" stroke-width="1.05" stroke-linejoin="round" stroke-linecap="round"/><path d="M209.1 176.2 L209.0 174.1 L209.0 171.2 L208.5 168.0 L207.3 165.1 L206.4 162.5 L205.5 159.9 L204.5 157.4 L203.2 155.1 L201.4 153.4 L199.4 152.0 L197.5 150.4 L195.5 148.6 L193.2 147.1 L190.8 145.5 L188.1 144.3 L185.1 143.3 L182.7 141.2 L180.6 138.6 L177.9 136.8 L174.8 135.8 L172.5 134.4 L170.8 132.7 L168.8 131.4 L166.8 130.3 L164.2 129.0 L161.3 127.2 L158.9 125.7 L157.5 126.3 L158.0 125.3 L160.3 125.4 L163.0 125.1 L165.2 124.3 L167.4 124.0 L169.3 122.8 L170.5 121.1 L171.6 119.5 L171.5 117.7 L171.0 115.8 L171.2 114.0 L170.7 112.8 L170.8 111.0 L172.2 109.9 L173.8 109.4 L175.5 109.1 L177.1 110.1 L178.3 112.3 L179.4 114.0 L179.6 114.4 L180.1 112.7 L179.8 109.7 L178.9 106.5 L178.7 103.7 L178.5 101.7 L177.3 100.5 L176.1 99.2 L175.7 97.2 L174.9 95.1 L173.2 93.4 L171.0 91.8 L169.3 90.0 L168.7 87.7 L168.6 85.5 L167.7 83.6 L166.6 82.1 L166.0 80.1 L165.3 78.1 L163.9 76.9 L161.9 75.8 L160.9 74.0 L160.8 71.8 L160.2 69.8 L159.3 67.7 L158.4 65.2 L158.5 62.4 L159.6 59.9 L160.0 57.6 L160.7 55.8 L162.2 54.9 L163.4 54.1 L164.3 53.0 L165.7 52.3 L167.3 52.5 L168.9 52.9 L170.1 53.9 L171.0 54.9 L171.9 56.2 L172.1 58.1 L172.8 60.0 L174.7 61.4 L176.5 63.3 L177.9 65.5 L179.6 67.2 L181.4 68.6 L183.0 70.0 L184.5 71.4 L185.9 73.1 L187.0 74.9 L187.9 76.9 L188.9 78.6 L190.2 79.5 L191.5 79.8 L192.8 79.9 L193.4 79.8 L193.7 79.7 L193.5 78.4 L193.3 76.1 L193.1 73.5 L192.1 71.6 L190.6 71.0 L189.2 69.8 L188.0 69.1 L187.1 68.7 L187.5 67.9 L188.4 66.9 L189.7 66.1 L191.0 66.1 L192.8 66.2 L194.9 67.1 L196.7 68.8 L198.5 70.2 L200.6 71.8 L202.2 74.3 L203.7 76.5 L205.3 76.7 L205.2 75.4 L204.6 73.0 L203.7 70.3 L203.1 68.5 L202.4 66.9 L200.9 65.3 L199.1 64.6 L198.5 62.9 L199.9 62.5 L202.2 63.0 L204.4 63.3 L206.8 63.0 L210.0 63.9 L213.3 66.1 L215.8 68.3 L216.5 69.8 L216.2 69.0 L214.7 66.7 L213.0 63.8 L211.5 61.0 L209.6 59.4 L207.1 59.3 L204.9 58.6 L203.2 57.4 L201.3 56.8 L199.3 56.5 L197.7 55.6 L196.6 54.1 L195.8 52.4 L194.6 50.9 L193.6 49.2 L193.6 47.4 L194.5 45.7 L196.2 44.3 L198.5 43.2 L200.7 42.1 L202.8 40.7 L205.3 39.5 L208.1 38.8 L210.9 38.3 L213.8 38.1 L216.9 38.0 L220.0 37.8 L223.0 37.4 L226.2 37.1 L229.5 36.7 L232.5 35.5 L234.9 34.9 L236.8 33.9 L237.5 32.2 L238.3 30.9 L238.9 29.9 L239.6 29.0 L240.4 29.6 L240.6 29.9 L241.2 30.1 L241.6 31.3 L242.2 33.2 L243.3 35.1 L244.0 36.6 L245.1 38.1 L246.6 39.3 L248.5 40.1 L250.6 40.6 L253.0 41.0 L255.6 41.6 L258.2 42.0 L260.7 42.0 L263.1 41.7 L265.3 41.6 L267.2 42.3 L269.0 43.1 L270.5 44.1 L271.6 45.4 L272.9 46.4 L274.6 47.1 L276.5 47.9 L278.7 48.7 L281.0 48.9 L282.8 49.3 L284.2 50.5 L285.4 51.0 L286.4 50.9 L286.5 51.7 L285.5 53.4 L283.5 55.6 L280.9 57.7 L279.1 60.1 L277.6 62.4 L275.5 64.0 L273.7 65.7 L272.8 67.7 L272.3 69.9 L272.8 72.0 L274.2 73.7 L274.9 75.7 L274.0 77.6 L272.3 79.4 L270.9 81.4 L270.2 83.6 L270.9 85.6 L272.2 87.3 L273.2 89.3 L273.2 91.6 L272.7 93.8 L272.5 96.2 L272.7 98.1 L272.9 98.5 L273.2 98.6 L274.8 98.7 L276.9 98.5 L278.8 98.1 L281.0 97.2 L283.5 96.2 L286.2 95.7 L288.6 95.5 L290.9 95.1 L293.2 95.3 L295.1 96.0 L296.5 96.7 L297.0 98.0 L297.8 99.1 L299.2 100.5 L298.7 101.7 L297.4 101.4 L295.7 101.6 L294.0 102.7 L293.1 103.9 L292.0 104.8 L290.8 105.9 L290.7 107.6 L291.0 109.4 L291.6 111.6 L292.2 114.4 L293.1 117.2 L294.6 119.5 L295.5 121.6 L296.3 123.6 L297.1 125.4 L298.2 127.5 L299.1 130.3 L299.1 133.8 L299.9 136.9 L301.3 138.5 L302.3 139.5 L304.2 140.5 L306.0 140.9 L306.9 141.8 L305.8 142.7 L303.6 143.3 L300.9 143.4 L298.6 143.3 L296.4 143.0 L294.6 141.5 L292.7 140.1 L290.6 139.3 L289.3 137.7 L287.8 135.9 L285.9 134.9 L284.8 135.4 L284.3 136.6 L283.2 138.6 L282.2 141.0 L282.3 143.2 L282.4 145.4 L282.2 147.4 L282.4 149.1 L283.4 150.4 L285.1 152.4 L287.9 154.6 L291.3 156.2 L294.5 157.6 L297.8 158.1 L301.2 158.6 L304.3 159.7 L307.0 160.9 L308.2 163.0 L308.3 165.4 L308.8 167.6 L309.7 169.5 L310.4 171.0 L310.4 172.7 L310.9 174.4 L312.1 175.6 L313.7 176.3 L315.4 177.0 L316.9 178.2 L318.4 179.4 L320.1 180.6 L322.1 181.5 L324.3 182.0 L324.8 183.5 L323.8 183.7 L322.2 184.4 L320.3 185.0 L318.7 185.5 L317.3 186.1 L315.5 186.2 L314.2 187.5 L314.4 189.1 L315.0 191.1 L316.1 193.7 L317.5 196.4 L318.9 199.0 L320.0 201.6 L320.5 204.2 L320.7 206.8 L322.4 209.4 L324.5 209.7 L326.5 210.0 L329.2 211.1 L332.0 211.6 L334.7 210.8 L337.4 210.0 L341.0 211.0" fill="none" stroke="#222" stroke-width="1.05" stroke-linejoin="round" stroke-linecap="round"/><path d="M179.4 119.4 L182.1 120.4 L185.0 121.5 L188.1 123.0 L191.3 124.9 L193.0 126.5 L194.7 127.9 L196.9 128.6 L199.3 129.0 L201.5 129.8 L203.6 130.9 L205.4 132.0 L207.5 132.9 L210.3 135.7 L211.5 139.1 L212.7 142.5 L215.1 145.2 L216.6 146.5 L217.8 148.4 L219.6 149.7 L221.9 150.3 L223.8 151.2 L225.4 152.6 L227.3 155.2 L227.0 157.3 L225.5 158.8 L223.9 160.1 L222.8 161.8 L221.3 163.6 L219.1 163.9 L217.1 162.5 L215.3 161.6 L213.2 161.2 L211.0 160.5 L208.7 159.5 L206.9 157.4 L205.3 154.7 L203.2 152.3 L200.6 149.8 L197.5 147.7 L193.6 146.4 L191.4 145.9 L189.7 144.6 L188.2 142.8 L186.8 141.1 L185.3 139.7 L183.6 138.8 L180.6 136.5 L177.8 134.0 L175.2 131.7 L172.9 129.5 L171.5 127.3 L171.0 124.9 L170.9 122.9 L171.5 121.9 L172.5 120.9 L174.3 119.7 L176.9 121.0 L174.1 121.3 L171.2 121.4" fill="none" stroke="#222" stroke-width="1.05" stroke-linejoin="round" stroke-linecap="round"/><path d="M274.8 68.8 L276.3 66.1 L277.8 64.5 L279.8 63.5 L281.7 62.2 L283.2 60.3 L284.7 58.8 L286.4 57.4 L289.2 54.8 L292.3 52.9 L295.7 51.7 L299.0 50.4 L302.0 48.8 L304.9 47.1 L307.6 45.1 L310.3 43.2 L313.3 42.4 L316.3 42.2 L319.2 41.2 L322.4 39.3 L324.6 38.5 L327.1 38.7 L329.8 38.7 L332.5 37.9 L335.0 37.4 L337.6 37.7 L341.0 36.8" fill="none" stroke="#222" stroke-width="1.05" stroke-linejoin="round" stroke-linecap="round"/><path d="M273.1 72.5 L275.8 70.3 L278.0 69.0 L280.2 67.9 L282.5 66.3 L284.6 64.5 L286.9 63.5 L289.0 62.2 L290.4 60.5 L292.1 59.3 L294.0 58.6 L295.7 57.5 L299.0 55.4 L302.5 53.4 L304.4 52.7 L306.5 52.4 L308.6 52.1 L310.7 51.8 L312.7 51.1 L314.8 50.0 L318.8 50.1 L321.9 51.8 L324.5 54.6 L327.4 56.9 L330.5 57.5 L333.3 57.2 L336.4 57.0 L339.2 56.5 L341.0 55.7" fill="none" stroke="#222" stroke-width="1.05" stroke-linejoin="round" stroke-linecap="round"/><path d="M341.2 29.2 L339.2 29.2 L336.4 28.7 L333.1 28.3 L330.0 28.9 L327.4 30.1 L324.5 31.3 L322.1 33.3 L320.6 35.9 L318.6 38.4 L315.9 40.8 L314.6 43.8 L314.7 45.5 L315.8 46.4 L318.4 46.6 L321.1 46.2 L323.0 47.0 L322.8 48.3 L321.6 49.3 L319.9 49.9 L318.5 49.8" fill="none" stroke="#222" stroke-width="1.05" stroke-linejoin="round" stroke-linecap="round"/><path d="M68.1 85.0 L69.4 85.8 L70.0 87.6 L71.1 89.5 L71.8 91.5 L72.2 93.9 L73.4 96.1 L75.2 97.7 L76.4 99.5 L76.1 101.2 L75.2 102.3 L74.5 103.0 L73.5 103.7 L72.3 102.8 L71.0 101.1 L68.8 99.6 L67.5 97.7 L66.7 95.4 L65.0 93.8 L62.8 92.6 L61.4 90.8 L61.8 89.0 L62.7 87.8 L63.1 86.6 L64.0 86.0 L65.0 85.5 L66.1 84.2 L67.5 84.3 L65.4 84.3 L63.7 85.6" fill="none" stroke="#222" stroke-width="1.05" stroke-linejoin="round" stroke-linecap="round"/><path d="M93.9 127.2 L94.3 128.4 L95.2 129.9 L96.1 131.8 L95.8 133.7 L94.2 134.7 L92.5 135.7 L91.3 137.0 L90.6 137.9 L89.3 138.7 L88.0 138.0 L88.0 136.5 L88.6 135.4 L88.6 134.2 L88.1 132.3 L88.4 130.4 L89.4 129.2 L90.6 128.6 L91.7 128.0 L92.6 127.2 L89.6 129.4" fill="none" stroke="#222" stroke-width="1.05" stroke-linejoin="round" stroke-linecap="round"/><path d="M90.9 144.8 L91.7 146.0 L92.6 148.3 L93.7 151.0 L94.9 153.2 L95.8 155.2 L96.2 157.5 L96.6 159.3 L96.5 160.9 L95.4 160.8 L94.0 159.5 L92.0 158.8 L89.9 158.3 L88.3 157.0 L86.9 155.2 L85.7 153.5 L85.4 152.1 L85.5 151.1 L85.1 150.0 L84.6 148.2 L84.8 146.5 L86.3 145.4 L88.4 144.8 L90.0 144.0 L88.0 145.8 L85.6 147.3" fill="none" stroke="#222" stroke-width="1.05" stroke-linejoin="round" stroke-linecap="round"/><path d="M97.6 166.1 L99.0 167.9 L100.7 170.3 L102.1 172.6 L102.7 173.9 L102.9 175.3 L101.8 176.6 L100.0 177.0 L98.5 177.2 L97.1 176.8 L95.8 175.7 L94.6 174.5 L93.1 173.4 L92.1 171.9 L91.6 170.1 L91.9 168.3 L92.8 167.5 L93.5 166.7 L94.6 165.6 L96.1 165.6 L92.6 167.2" fill="none" stroke="#222" stroke-width="1.05" stroke-linejoin="round" stroke-linecap="round"/><path d="M224.9 41.6 L226.5 41.4 L228.1 42.3 L229.3 43.2 L230.4 43.8 L231.3 45.6 L230.7 47.9 L229.2 49.8 L228.3 50.9 L227.7 52.1 L226.5 53.6 L224.9 54.0 L223.4 53.5 L222.6 52.2 L222.4 50.5 L222.0 49.1 L221.6 47.9 L221.8 46.4 L222.7 44.6 L223.6 42.8 L222.5 45.4 L221.0 47.8" fill="none" stroke="#222" stroke-width="1.05" stroke-linejoin="round" stroke-linecap="round"/><path d="M257.2 54.2 L258.4 54.3 L258.7 55.5 L258.8 56.8 L259.1 58.0 L258.5 58.9 L257.6 59.5 L256.4 59.7 L255.4 59.1 L255.4 58.2 L255.0 57.4 L254.0 56.4 L253.9 55.1 L255.0 54.7 L256.1 54.2 L257.4 54.2 L254.8 55.7" fill="none" stroke="#222" stroke-width="1.05" stroke-linejoin="round" stroke-linecap="round"/><path d="M265.9 66.9 L266.4 67.8 L267.3 68.2 L268.6 69.0 L268.4 70.4 L267.3 70.6 L266.0 70.6 L264.8 71.2 L263.6 72.0 L262.7 71.7 L262.2 70.7 L261.7 70.2 L261.4 69.3 L262.3 68.9 L263.7 68.6 L264.7 67.5 L261.8 69.7" fill="none" stroke="#222" stroke-width="1.05" stroke-linejoin="round" stroke-linecap="round"/><path d="M246.8 74.3 L248.5 74.4 L249.9 75.1 L250.5 75.2 L251.9 75.7 L251.6 77.5 L250.1 79.8 L248.9 82.5 L247.1 84.2 L245.3 84.1 L243.7 83.9 L242.2 83.7 L241.1 83.3 L240.2 82.6 L239.0 81.9 L237.7 80.6 L238.2 78.9 L240.1 78.2 L242.7 77.3 L244.6 75.2 L243.0 77.1 L241.0 78.4 L238.9 79.6" fill="none" stroke="#222" stroke-width="1.05" stroke-linejoin="round" stroke-linecap="round"/><path d="M274.7 104.3 L277.2 103.3 L280.0 103.5 L282.5 104.8 L284.4 105.8 L286.5 106.9 L287.7 109.1 L287.7 111.5 L288.0 113.2 L288.2 115.6 L286.7 117.6 L284.3 118.0 L282.9 118.4 L280.8 119.1 L278.6 118.2 L276.8 116.4 L274.9 115.0 L272.9 114.2 L271.0 113.6 L269.1 113.6 L267.7 113.5 L266.8 113.1 L266.0 112.8 L266.1 112.3 L267.3 111.9 L268.4 110.3 L269.8 107.5 L272.9 106.3 L270.7 107.9 L268.7 109.7 L266.7 111.5" fill="none" stroke="#222" stroke-width="1.05" stroke-linejoin="round" stroke-linecap="round"/><path d="M273.6 134.8 L274.4 136.8 L274.8 139.9 L275.8 142.8 L277.0 145.3 L276.5 147.8 L275.7 150.3 L274.9 152.5 L273.7 153.4 L272.3 153.0 L271.0 151.5 L270.0 149.3 L268.8 147.3 L267.8 145.0 L267.4 142.1 L267.5 139.4 L267.8 137.4 L268.7 136.1 L269.9 135.1 L271.7 135.2 L270.0 136.6 L267.7 137.4" fill="none" stroke="#222" stroke-width="1.05" stroke-linejoin="round" stroke-linecap="round"/><path d="M302.7 169.0 L304.5 170.0 L305.8 172.1 L306.8 173.8 L307.6 175.3 L306.3 176.6 L303.7 177.4 L300.8 178.1 L298.2 178.0 L296.5 176.9 L294.9 175.3 L294.3 173.5 L294.4 171.9 L295.6 170.6 L297.9 169.6 L300.7 169.6 L298.4 170.0 L296.3 170.7 L294.6 172.2" fill="none" stroke="#222" stroke-width="1.05" stroke-linejoin="round" stroke-linecap="round"/><path d="M237.5 162.5 L239.7 165.1 L240.8 167.2 L242.2 169.0 L243.7 170.7 L244.6 172.8 L245.7 175.4 L246.3 176.6 L246.3 177.9 L245.3 178.9 L244.0 178.7 L242.3 177.8 L240.0 176.1 L237.4 174.5 L234.9 173.2 L233.8 170.9 L232.5 168.8 L230.7 166.9 L230.6 165.0 L231.6 164.0 L233.0 163.0 L234.8 162.5 L232.8 163.8 L230.9 165.2" fill="none" stroke="#222" stroke-width="1.05" stroke-linejoin="round" stroke-linecap="round"/><path d="M218.7 174.8 L218.5 176.3 L218.5 178.1 L219.4 179.9 L219.4 181.6 L218.4 182.1 L217.3 182.7 L215.7 182.9 L214.4 182.0 L214.5 180.6 L215.1 178.9 L215.3 177.5 L215.0 176.5 L215.2 175.5 L216.2 174.9 L217.4 175.1 L214.6 176.2" fill="none" stroke="#222" stroke-width="1.05" stroke-linejoin="round" stroke-linecap="round"/><path d="M220.8 186.2 L221.2 187.1 L221.3 188.6 L221.6 190.0 L221.6 190.8 L221.3 191.3 L220.6 191.8 L219.9 191.4 L219.4 191.3 L218.8 190.6 L218.6 189.4 L218.7 188.1 L219.1 187.5 L219.2 186.8 L219.7 186.1 L220.3 185.7 L218.6 187.1" fill="none" stroke="#222" stroke-width="1.05" stroke-linejoin="round" stroke-linecap="round"/><path d="M248.9 198.8 L249.0 199.8 L249.3 201.2 L249.1 202.5 L248.8 203.5 L248.1 203.6 L247.4 203.4 L246.7 203.7 L246.0 204.0 L244.9 203.4 L243.9 202.2 L243.8 200.7 L244.7 199.5 L245.8 199.3 L246.8 199.0 L247.6 198.6 L245.2 200.1" fill="none" stroke="#222" stroke-width="1.05" stroke-linejoin="round" stroke-linecap="round"/><path d="M260.7 196.6 L261.1 198.4 L261.3 200.9 L262.1 203.5 L261.6 205.9 L260.0 206.8 L258.1 207.3 L256.2 207.2 L254.8 206.2 L254.5 204.7 L254.1 202.7 L253.8 200.6 L254.4 199.0 L255.3 197.8 L256.9 196.9 L258.5 196.6 L256.7 198.2 L254.4 199.1" fill="none" stroke="#222" stroke-width="1.05" stroke-linejoin="round" stroke-linecap="round"/><path d="M280.9 175.4 L281.6 176.5 L281.7 177.5 L282.3 178.0 L282.7 179.2 L281.9 180.9 L279.8 182.2 L277.3 182.7 L275.7 183.1 L274.6 183.0 L273.9 182.1 L273.8 181.2 L274.2 180.7 L275.2 179.5 L277.0 177.9 L279.0 176.6 L277.5 178.2 L275.7 179.3 L273.7 180.2" fill="none" stroke="#222" stroke-width="1.05" stroke-linejoin="round" stroke-linecap="round"/><path d="M310.2 208.2 L312.1 207.6 L314.1 207.4 L316.0 207.1 L316.5 208.0 L315.9 209.4 L315.8 212.2 L314.5 214.9 L312.5 216.0 L310.5 216.3 L308.0 215.9 L305.9 215.5 L304.2 214.8 L304.6 213.3 L306.2 211.4 L309.1 210.6 L307.0 211.5 L305.3 212.8 L304.6 215.0" fill="none" stroke="#222" stroke-width="1.05" stroke-linejoin="round" stroke-linecap="round"/><path d="M328.3 211.2 L331.4 211.7 L334.6 211.5 L337.1 211.0 L338.1 210.9 L337.8 212.2 L336.2 214.6 L333.5 216.7 L330.5 218.0 L327.2 218.3 L323.3 217.5 L320.2 216.2 L319.0 216.5 L319.8 215.9 L322.2 214.4 L325.5 213.0 L323.2 214.0 L320.8 214.8 L318.5 216.0" fill="none" stroke="#222" stroke-width="1.05" stroke-linejoin="round" stroke-linecap="round"/><path d="M321.6 45.7 L322.5 46.3 L322.4 47.5 L322.3 48.3 L322.4 49.2 L321.4 49.8 L319.6 50.6 L317.7 50.9 L316.3 50.1 L316.2 49.0 L316.3 48.2 L315.7 47.7 L315.6 47.0 L316.7 46.6 L318.4 45.7 L320.2 45.9 L317.7 45.7 L315.5 46.8" fill="none" stroke="#222" stroke-width="1.05" stroke-linejoin="round" stroke-linecap="round"/><path d="M340.9 8.5 L343.2 9.0 L346.3 9.4 L349.8 9.7 L352.6 10.5 L354.8 11.9 L356.9 13.3 L358.9 14.7 L360.7 16.2 L362.6 17.1 L364.7 17.5 L366.3 18.5 L367.2 19.9 L367.2 21.3 L366.4 22.5 L366.5 24.1 L367.1 25.5 L367.2 28.0 L367.5 31.2 L369.3 33.7 L371.3 34.9 L373.3 35.7 L375.7 36.6 L378.3 37.8 L380.8 38.3 L383.4 38.2 L385.9 37.3 L388.0 36.3 L389.0 37.0 L387.9 37.7 L385.6 38.7 L382.9 39.8 L380.7 41.3 L378.4 42.4 L375.8 41.9 L373.1 41.3 L370.7 42.1 L368.7 43.8 L366.8 45.1 L365.0 45.9 L363.4 46.3 L361.5 46.5 L360.4 47.5 L360.2 48.8 L360.4 50.2 L361.7 51.0 L363.8 51.5 L365.9 52.9 L365.1 54.4 L363.0 54.6 L360.0 55.5 L356.3 56.1 L352.9 56.3 L349.5 56.4 L346.0 55.7 L343.1 54.5 L341.0 53.7" fill="none" stroke="#222" stroke-width="1.05" stroke-linejoin="round" stroke-linecap="round"/><path d="M366.9 19.5 L369.4 19.7 L373.1 20.1 L375.2 20.0 L377.2 19.9 L380.8 19.0 L383.8 17.7 L386.8 17.3 L389.8 17.3 L392.8 17.2 L395.6 17.1 L398.5 17.4 L401.4 17.5 L404.7 17.8 L408.5 18.4 L410.6 18.6 L412.7 19.0 L414.8 18.7 L416.9 18.4 L420.7 19.3 L424.0 20.6 L427.2 20.6 L429.8 19.4 L432.3 18.6 L435.0 17.3 L437.1 14.8 L438.6 11.9 L440.3 9.7 L442.3 8.3 L444.1 7.1 L445.6 6.0 L446.5 5.0" fill="none" stroke="#222" stroke-width="1.05" stroke-linejoin="round" stroke-linecap="round"/><path d="M383.9 48.1 L385.4 48.5 L386.9 49.5 L388.4 50.0 L389.1 51.1 L388.2 51.9 L386.5 52.9 L384.4 53.1 L383.0 53.0 L381.8 52.8 L380.3 52.4 L379.0 51.6 L378.6 50.5 L379.5 50.2 L380.8 49.6 L382.4 49.0 L378.8 50.8" fill="none" stroke="#222" stroke-width="1.05" stroke-linejoin="round" stroke-linecap="round"/><path d="M435.7 139.7 L436.5 141.9 L436.8 145.1 L436.8 148.5 L437.3 151.3 L437.1 153.8 L436.2 156.2 L435.6 158.4 L434.4 159.5 L434.0 158.7 L433.6 157.2 L432.9 155.2 L431.9 153.2 L430.6 151.0 L429.5 148.2 L429.2 145.4 L429.9 143.5 L430.8 142.3 L431.8 140.7 L433.5 140.2 L431.5 141.7 L429.6 143.3" fill="none" stroke="#222" stroke-width="1.05" stroke-linejoin="round" stroke-linecap="round"/><path d="M458.5 156.2 L460.3 157.1 L461.5 159.2 L462.4 161.3 L463.8 163.3 L464.1 165.7 L462.9 168.1 L461.2 169.7 L460.4 170.8 L459.0 171.6 L457.3 171.0 L456.0 169.3 L455.1 167.4 L454.0 165.1 L452.7 162.2 L451.8 159.3 L452.3 157.1 L453.6 156.8 L455.0 156.1 L456.8 155.8 L454.6 156.4 L452.5 157.3" fill="none" stroke="#222" stroke-width="1.05" stroke-linejoin="round" stroke-linecap="round"/><path d="M582.9 193.2 L585.5 193.7 L589.2 193.6 L593.1 192.6 L595.7 191.0 L596.9 189.3 L597.7 187.2 L598.0 184.7 L599.3 182.5 L601.5 180.9 L604.2 179.3 L607.2 178.6 L609.8 178.7 L612.0 178.3 L614.2 178.1 L616.1 178.4 L617.9 179.0 L619.2 180.5 L619.6 182.7 L619.6 185.0 L619.1 187.0 L618.5 188.8 L618.0 191.1 L616.8 193.1 L615.4 194.8 L614.2 196.8 L612.4 198.3 L610.2 199.3 L608.8 201.1 L609.1 203.3 L610.1 205.6 L611.5 207.9 L613.5 209.6 L615.9 210.3 L618.7 210.4 L621.6 211.0 L623.9 212.5 L625.7 215.2 L626.5 219.0 L626.6 222.6 L627.7 224.9" fill="none" stroke="#222" stroke-width="1.05" stroke-linejoin="round" stroke-linecap="round"/><path d="M549.9 205.0 L549.3 207.1 L547.8 209.8 L545.8 212.6 L544.0 214.9 L542.3 216.7 L540.4 217.9 L538.4 219.2 L536.1 221.0 L532.2 222.0 L529.9 222.3 L527.6 223.3 L525.4 223.5 L523.1 223.9 L520.2 224.9" fill="none" stroke="#222" stroke-width="1.05" stroke-linejoin="round" stroke-linecap="round"/><path d="M267.0 138.9 L268.5 140.7 L269.9 143.8 L271.9 146.9 L274.8 148.6 L277.4 149.7 L279.8 151.3 L282.1 152.7 L284.3 153.7 L286.1 154.2 L287.6 154.8 L289.0 155.2 L290.7 155.1 L292.6 155.4 L294.6 155.8 L296.7 155.8 L298.8 156.5 L300.7 157.9 L302.8 159.3 L304.8 161.1 L306.5 163.1 L308.7 164.6 L311.2 166.1 L312.8 168.4 L313.8 170.9 L313.8 173.6 L312.7 176.2 L311.4 178.5 L311.4 180.5 L312.9 181.1 L315.0 180.9 L317.4 181.3 L319.3 182.5 L321.1 183.4 L323.4 183.4 L325.2 184.0 L325.7 185.1 L325.5 186.7 L324.7 188.8 L322.9 190.4 L320.8 191.3 L319.2 192.2 L318.0 193.6 L316.9 195.0 L316.4 196.4 L316.0 198.0 L315.8 199.9 L316.6 201.7 L317.8 203.0 L319.7 204.0 L322.1 203.8 L324.7 202.9 L327.4 202.4 L330.0 202.3 L332.6 202.3 L335.4 202.6 L338.6 202.7 L342.2 202.5 L344.2 202.1 L346.2 201.7 L348.3 201.7 L350.4 201.6 L352.4 201.2 L354.5 201.3 L358.5 201.8 L362.5 201.7 L366.4 201.4 L370.4 201.6 L374.4 201.8 L378.4 202.0 L382.4 202.2 L386.3 202.2 L390.3 202.2 L394.3 202.8 L398.3 202.6 L402.3 201.9 L404.3 202.5 L406.4 203.2 L408.4 202.6 L410.5 202.0 L412.5 202.4 L414.6 202.2 L418.2 201.1 L421.3 201.3 L424.1 202.4 L426.7 202.3 L429.3 201.2 L432.3 200.5 L435.5 200.2 L438.5 200.5 L440.5 200.8" fill="none" stroke="#222" stroke-width="1.05" stroke-linejoin="round" stroke-linecap="round"/><path d="M440.6 199.7 L443.5 200.4 L445.6 201.5 L447.8 201.7 L450.2 201.6 L452.4 202.3 L456.2 203.3 L458.9 204.3 L461.1 205.5 L463.2 206.9 L465.5 208.4 L468.4 209.4 L471.5 210.4 L474.3 212.2 L476.9 214.2 L479.7 216.1 L482.6 218.3 L485.3 220.6 L488.2 222.0 L490.8 222.5 L493.0 223.0 L495.2 223.7 L497.9 224.4 L501.6 224.9 L503.7 225.2 L505.9 225.5 L508.0 226.0 L510.1 226.5 L513.8 226.9 L516.8 226.6 L519.3 225.7 L521.5 225.5 L523.0 225.0" fill="none" stroke="#222" stroke-width="1.05" stroke-linejoin="round" stroke-linecap="round"/><path d="M338.7 231.6 L341.6 230.7 L344.9 229.8 L347.9 229.1 L349.6 229.8 L349.7 231.6 L349.5 234.7 L348.0 238.0 L346.6 241.0 L345.2 243.9 L342.7 246.2 L340.0 248.1 L338.1 250.0 L336.8 251.6 L335.6 252.5 L334.8 253.2 L333.9 253.4 L333.0 253.0 L331.7 252.1 L331.2 250.5 L330.8 248.8 L330.3 247.2 L330.2 245.2 L330.0 243.1 L330.5 240.9 L332.1 238.6 L334.0 235.9 L336.4 233.4 L335.1 235.4 L333.5 237.2 L331.8 238.9 L330.6 240.9" fill="none" stroke="#222" stroke-width="1.05" stroke-linejoin="round" stroke-linecap="round"/><path d="M311.5 208.9 L313.0 209.2 L314.5 209.4 L315.9 209.8 L316.6 210.7 L315.9 211.6 L314.7 212.5 L313.8 213.8 L312.9 215.1 L311.7 216.3 L309.9 217.3 L308.1 217.4 L306.7 217.0 L305.9 216.2 L304.8 215.8 L303.8 214.8 L304.5 214.0 L306.0 213.3 L307.5 211.2 L310.1 210.5 L308.5 212.0 L306.8 213.4 L304.3 213.9" fill="none" stroke="#222" stroke-width="1.05" stroke-linejoin="round" stroke-linecap="round"/><path d="M332.5 214.9 L334.8 213.8 L336.8 213.1 L337.9 213.0 L337.8 211.7 L337.6 212.7 L336.3 214.2 L334.2 215.5 L332.1 216.6 L329.5 217.3 L326.4 218.1 L323.3 218.7 L321.0 218.6 L319.5 218.3 L318.4 218.1 L317.5 217.1 L318.3 216.0 L320.9 215.6 L325.0 215.8 L327.1 215.9 L328.8 214.1 L326.8 214.9 L324.7 215.0 L322.6 215.4 L320.7 216.4 L318.7 217.0" fill="none" stroke="#222" stroke-width="1.05" stroke-linejoin="round" stroke-linecap="round"/><path d="M249.7 198.9 L250.4 199.8 L251.0 201.1 L251.1 202.5 L250.6 203.2 L250.1 203.9 L249.2 205.2 L247.9 205.8 L246.3 205.7 L245.7 204.5 L245.9 202.8 L246.0 201.4 L245.8 200.8 L246.0 199.5 L247.1 198.3 L248.6 199.4 L245.4 200.3" fill="none" stroke="#222" stroke-width="1.05" stroke-linejoin="round" stroke-linecap="round"/><path d="M257.8 198.4 L258.7 199.0 L260.1 200.7 L261.1 202.8 L260.9 204.7 L259.8 205.5 L258.5 206.6 L256.7 207.4 L254.8 207.1 L254.1 205.8 L254.0 204.1 L253.9 202.4 L254.2 201.2 L255.0 199.9 L256.3 198.6 L258.2 198.2 L256.5 200.0 L254.1 201.1" fill="none" stroke="#222" stroke-width="1.05" stroke-linejoin="round" stroke-linecap="round"/><path d="M279.7 176.8 L280.9 177.3 L282.5 177.5 L283.5 178.8 L282.7 179.4 L281.2 180.0 L279.2 181.1 L277.3 182.7 L275.6 183.9 L274.5 183.5 L273.9 182.7 L273.5 182.1 L273.6 181.5 L274.5 180.4 L276.4 179.5 L277.9 177.6 L276.2 180.3 L273.3 181.2" fill="none" stroke="#222" stroke-width="1.05" stroke-linejoin="round" stroke-linecap="round"/><path d="M301.7 170.6 L303.5 170.9 L305.7 171.3 L306.9 172.9 L306.7 174.1 L305.6 175.1 L303.2 175.9 L300.8 177.1 L298.5 177.9 L296.7 176.9 L295.3 175.2 L294.3 173.6 L293.9 172.4 L295.1 171.4 L297.4 170.8 L299.8 170.0 L297.8 170.7 L295.8 171.5 L294.0 172.4" fill="none" stroke="#222" stroke-width="1.05" stroke-linejoin="round" stroke-linecap="round"/><path d="M243.0 174.3 L243.7 175.3 L244.8 176.2 L246.1 176.4 L247.3 176.5 L248.5 177.2 L248.7 178.4 L247.7 179.1 L247.4 179.3 L246.8 180.0 L245.4 180.6 L244.0 180.3 L243.0 180.7" fill="none" stroke="#222" stroke-width="1.05" stroke-linejoin="round" stroke-linecap="round"/><path d="M314.7 257.2 L316.0 258.6 L317.3 261.1 L317.6 264.1 L317.4 266.4 L317.4 267.9 L316.8 269.1 L316.0 269.5 L315.9 269.6 L315.1 269.6 L313.4 269.3 L311.9 268.2 L311.5 266.7 L311.6 265.0 L311.7 263.2 L312.1 261.6 L311.9 260.3 L312.1 258.6 L313.5 257.8 L313.7 256.0 L312.4 257.8 L311.5 260.0" fill="none" stroke="#222" stroke-width="1.05" stroke-linejoin="round" stroke-linecap="round"/><path d="M381.7 228.0 L382.5 229.6 L384.3 231.2 L386.7 232.6 L389.4 233.6 L392.5 233.5 L395.9 233.6 L399.2 234.6 L402.3 234.8 L405.0 234.1 L407.7 233.9 L410.2 233.1 L411.8 231.4 L413.5 229.9 L415.1 228.2 L415.7 226.2 L416.6 225.0" fill="none" stroke="#222" stroke-width="1.05" stroke-linejoin="round" stroke-linecap="round"/><path d="M429.6 207.2 L429.7 208.4 L430.6 209.3 L432.1 209.7 L433.0 210.6 L432.3 211.4 L431.9 212.3 L432.1 213.3 L431.7 213.9" fill="none" stroke="#222" stroke-width="1.05" stroke-linejoin="round" stroke-linecap="round"/><path d="M196.3 265.8 L196.8 265.4 L198.0 265.4 L199.1 266.1 L200.3 266.5 L201.6 266.3 L203.1 266.3 L204.6 266.8 L206.2 267.6 L208.1 267.8 L210.3 267.9 L212.4 268.1 L214.3 268.4 L216.0 269.0 L216.6 270.3 L216.7 272.0 L218.1 272.5 L219.8 272.5 L221.5 273.4 L223.6 273.7 L226.0 273.3 L228.7 273.6 L231.7 273.9 L234.9 273.9 L238.0 273.5 L241.0 274.1 L243.9 275.7 L246.9 276.1 L249.7 275.9 L252.5 276.0 L255.0 276.6 L257.4 277.4 L259.7 278.0 L262.1 278.2 L264.1 277.9 L265.8 277.5 L267.3 277.2 L269.5 277.1 L271.3 277.8 L272.4 278.9 L273.5 279.5 L275.1 279.2 L277.2 278.9 L279.6 279.1 L281.6 279.1 L283.6 278.8 L285.5 279.0 L287.1 278.6 L288.7 278.5 L289.0 279.7 L288.9 281.4 L288.3 283.1 L287.3 284.4 L287.2 285.7 L286.9 286.8 L286.1 287.2 L285.2 287.6 L284.0 288.4 L282.1 289.1 L280.0 289.6 L277.6 289.6 L274.6 289.1 L271.5 289.5 L268.5 291.3 L265.9 292.5 L263.6 292.8 L261.4 292.7 L259.4 292.3 L257.8 292.2 L256.3 292.8 L254.7 293.1 L253.4 292.3 L251.7 291.8 L249.7 292.1 L247.8 293.0 L246.0 294.7 L243.8 295.1 L242.0 293.8 L240.2 292.8 L238.1 292.7 L235.9 292.5 L234.1 291.4 L232.2 290.3 L229.9 289.8 L227.8 289.2 L225.5 288.6 L222.9 288.1 L220.4 287.5 L217.9 287.1 L215.8 286.8 L214.1 286.0 L212.3 285.3 L210.1 284.9 L207.3 284.5 L204.0 284.7 L200.8 284.4 L198.3 283.4 L196.5 282.8 L195.6 282.0 L195.1 281.1 L193.8 280.3 L192.2 278.5 L191.0 275.8 L190.9 273.0 L191.9 270.8 L192.8 269.2 L193.7 267.2 L195.0 265.5 L193.8 267.2 L192.2 268.7 L191.3 270.6" fill="none" stroke="#222" stroke-width="1.05" stroke-linejoin="round" stroke-linecap="round"/><path d="M72.4 412.4 L73.0 410.3 L74.4 407.6 L76.7 405.2 L79.3 403.5 L81.6 401.7 L84.0 400.0 L86.7 398.9 L89.1 397.4 L91.2 395.8 L93.3 394.4 L95.9 393.8 L99.1 393.7 L101.2 393.1 L103.4 392.6 L105.9 392.9 L108.4 393.4 L111.1 393.6 L113.8 393.6 L116.4 393.6 L119.0 393.5 L121.5 393.8 L124.1 393.7 L126.6 393.0 L129.2 392.8 L131.7 392.6 L134.2 392.2 L136.4 392.0 L138.8 392.5 L143.0 392.8 L146.6 392.2 L149.6 390.7 L152.7 389.1 L155.9 389.3 L159.0 390.1 L162.0 390.5 L164.6 391.4 L166.7 392.9 L168.8 394.4 L170.8 395.8 L172.5 397.5 L174.3 398.7 L176.4 399.6 L177.7 401.3 L178.3 403.5 L179.6 405.7 L181.3 408.1 L181.8 410.7 L182.4 412.4" fill="none" stroke="#222" stroke-width="1.05" stroke-linejoin="round" stroke-linecap="round"/><path d="M68.0 429.2 L67.7 430.7 L67.9 432.7 L67.5 435.0 L66.7 437.2 L67.0 439.4 L68.3 441.5 L69.3 443.4 L68.4 445.1" fill="none" stroke="#222" stroke-width="1.05" stroke-linejoin="round" stroke-linecap="round"/><path d="M245.7 427.4 L246.8 428.3 L248.5 429.6 L250.0 431.3 L251.7 433.3 L254.1 435.0 L257.0 436.2 L260.4 436.7 L263.7 436.4 L266.9 436.5 L270.4 436.8 L273.9 436.6 L277.6 436.1 L281.5 436.0 L283.5 436.3 L285.6 436.7 L287.6 437.3 L289.6 437.6 L293.4 437.0 L296.7 437.0 L299.6 438.0 L302.3 438.9 L305.2 439.5 L308.7 440.2 L312.2 441.9 L315.0 444.0 L317.2 445.1" fill="none" stroke="#222" stroke-width="1.05" stroke-linejoin="round" stroke-linecap="round"/><path d="M150.5 225.0 L150.1 226.1 L150.1 227.7 L150.6 229.2 L150.9 230.6 L152.2 232.0 L154.2 232.8 L156.2 233.4 L157.8 234.1 L159.2 233.3 L159.2 231.6 L158.7 230.0 L158.6 229.0" fill="none" stroke="#222" stroke-width="1.05" stroke-linejoin="round" stroke-linecap="round"/><path d="M168.6 224.9 L169.4 225.7 L170.7 226.6 L171.7 228.3 L172.9 229.7 L174.9 230.5 L176.9 231.6 L178.5 232.7 L179.1 233.0 L178.9 232.2 L178.4 230.1 L176.9 228.4 L176.4 227.0" fill="none" stroke="#222" stroke-width="1.05" stroke-linejoin="round" stroke-linecap="round"/><path d="M173.4 232.4 L173.7 234.2 L174.0 236.6 L175.2 239.1 L175.2 241.2 L174.0 242.2 L172.9 243.5 L171.2 244.0 L170.4 242.9 L169.9 241.4 L169.3 239.1 L168.6 236.7 L168.4 234.8 L169.4 234.1 L170.3 233.2 L172.0 233.2 L168.5 234.9" fill="none" stroke="#222" stroke-width="1.05" stroke-linejoin="round" stroke-linecap="round"/><path d="M316.2 255.7 L316.9 258.4 L317.5 260.4 L317.9 262.5 L317.9 264.6 L317.8 266.7 L317.1 269.6 L316.6 270.6 L315.9 271.6 L315.1 271.2 L314.4 270.5 L313.4 269.5 L313.2 267.5 L312.8 265.4 L311.8 263.7 L311.8 261.8 L312.6 260.0 L312.8 258.1 L313.4 256.8 L314.5 256.3 L314.9 255.5 L315.7 255.0 L313.2 256.7" fill="none" stroke="#222" stroke-width="1.05" stroke-linejoin="round" stroke-linecap="round"/><path d="M335.4 225.2 L334.0 227.0 L332.0 229.7 L330.5 233.2 L330.0 237.0 L330.2 239.1 L331.1 241.1 L332.4 243.4 L332.4 245.8 L332.1 248.2 L333.0 250.4 L335.1 252.6 L336.4 252.9 L338.3 251.8 L339.8 249.9 L341.0 248.8" fill="none" stroke="#222" stroke-width="1.05" stroke-linejoin="round" stroke-linecap="round"/><path d="M502.9 263.9 L505.9 261.7 L507.4 260.3 L508.5 258.3 L510.3 257.3 L512.6 257.0 L515.5 255.8 L518.7 255.4 L522.3 256.0 L526.0 257.1 L529.4 257.8 L532.1 257.2 L534.3 256.1 L536.6 255.5 L539.2 254.6 L542.0 253.1 L545.0 251.0 L548.3 249.1 L551.6 247.4 L554.4 245.0 L557.3 242.3 L560.3 240.3 L563.2 239.1 L565.5 238.0 L567.3 236.5 L568.9 235.7 L570.1 235.7 L570.9 236.3 L570.4 237.1 L569.4 237.9 L568.9 239.7 L567.3 242.0 L564.6 244.2 L561.8 246.7 L559.6 249.4 L557.6 251.7 L555.3 253.7 L553.2 255.4 L551.6 256.9 L551.0 258.2 L551.1 259.3 L550.7 260.6 L549.2 261.7 L546.9 263.2 L544.8 265.5 L542.2 268.0 L539.2 270.6 L537.5 271.9 L535.5 272.9 L533.4 274.0 L531.3 275.2 L529.1 276.3 L527.1 277.7 L525.5 279.0 L523.7 280.2 L520.7 281.7 L518.1 282.7 L515.7 283.7 L513.6 284.8 L511.5 285.9 L509.4 285.8 L507.5 285.4 L505.5 285.5 L503.4 285.3 L501.2 284.8 L499.2 283.8 L498.0 282.3 L496.7 280.4 L495.6 277.8 L494.7 275.0 L495.1 272.3 L497.0 270.6 L498.6 268.5 L501.7 267.3 L499.7 269.0 L497.5 270.6 L495.6 272.6" fill="none" stroke="#222" stroke-width="1.05" stroke-linejoin="round" stroke-linecap="round"/><path d="M627.5 225.3 L626.1 227.9 L624.5 229.6 L624.2 231.7 L624.5 234.2 L624.1 236.5 L623.2 238.7 L622.3 240.8 L621.6 243.0 L621.0 245.1 L620.7 247.4 L620.7 249.7 L620.4 252.0 L620.0 254.3 L620.1 256.5 L620.2 258.7 L620.2 260.9 L620.1 263.1 L620.8 265.1 L621.6 267.1 L622.4 271.1 L622.8 274.6 L621.8 277.3 L620.5 279.4 L619.2 281.6 L617.8 284.4 L617.6 288.1 L617.6 290.2 L616.9 292.2 L616.5 294.3 L616.8 296.5 L616.7 300.4 L615.9 303.6 L614.7 306.3 L613.5 309.0 L612.8 312.3 L611.9 315.9 L610.7 319.7 L610.4 321.8 L609.8 323.8 L608.6 325.8 L607.9 327.9 L607.9 330.4 L608.0 332.9 L607.8 335.6 L607.4 338.2 L606.8 340.7 L605.8 343.2 L605.3 345.6 L604.9 348.0 L604.0 350.0 L603.4 352.1 L602.5 354.0 L601.6 355.8 L600.9 359.7 L600.9 363.8 L600.3 365.8 L599.7 367.7 L600.2 369.9 L600.1 371.9 L599.0 373.7 L598.0 375.6 L597.2 377.5 L597.0 379.5 L596.8 381.6 L596.4 383.6 L596.6 385.6 L596.6 387.7 L596.3 389.7 L596.4 391.7 L596.0 395.5 L595.3 399.3 L594.5 402.9 L593.3 406.1 L592.3 409.1 L591.4 411.8 L590.1 414.1 L587.8 415.8 L585.0 417.5 L583.1 418.4 L581.3 419.3 L579.0 420.1 L577.0 421.3 L575.3 423.2 L573.3 424.7 L570.9 425.5 L568.6 426.6 L566.7 428.4 L564.5 429.6 L562.1 430.9 L560.0 432.8 L557.6 433.8 L554.8 434.2 L552.8 435.3 L551.2 437.2 L547.8 439.2 L544.4 440.2 L541.5 441.2 L538.9 442.1 L536.5 442.7 L534.4 443.6 L532.7 444.9 L531.3 445.1" fill="none" stroke="#222" stroke-width="1.05" stroke-linejoin="round" stroke-linecap="round"/><path d="M623.0 355.8 L622.8 357.2 L623.2 359.0 L623.9 361.3 L624.1 363.7 L623.7 366.2 L623.8 368.7 L624.0 371.8 L623.8 375.7 L624.5 378.4 L625.5 381.1 L625.3 383.4 L624.9 385.6 L625.2 387.8 L625.7 390.0 L626.4 392.1 L626.2 394.3 L625.7 397.0 L626.0 399.6 L627.4 402.4 L628.9 403.7 L629.9 405.2 L630.6 407.4 L630.8 411.1 L630.4 413.3 L629.9 415.5 L629.4 417.6 L629.6 419.8 L629.8 423.4 L629.6 425.9 L628.5 427.6 L627.2 428.2 L625.9 428.6 L624.8 427.8 L624.4 425.8 L624.7 423.5 L625.1 421.4 L625.4 419.2 L625.7 416.7 L625.4 414.0 L625.6 411.4 L626.1 408.3 L625.7 404.8 L625.0 401.6 L624.5 399.5" fill="none" stroke="#222" stroke-width="1.05" stroke-linejoin="round" stroke-linecap="round"/><path d="M625.0 354.1 L624.7 354.9 L623.9 355.4 L622.8 355.3 L622.7 355.6 L621.9 355.8 L621.3 355.2 L620.6 354.6 L620.5 353.7 L621.4 353.6 L622.0 353.5 L622.3 353.1 L622.4 352.6 L623.0 352.4 L624.0 352.5 L623.6 353.8 L622.5 352.3" fill="none" stroke="#222" stroke-width="1.05" stroke-linejoin="round" stroke-linecap="round"/><path d="M420.8 445.5 L422.3 443.4 L425.1 441.0 L426.5 439.5 L427.5 437.6 L430.4 435.4 L433.1 433.9 L435.4 432.3 L437.7 430.8 L440.1 429.1 L443.0 428.1 L446.2 427.8 L449.3 426.9 L452.1 427.0 L454.1 428.0 L456.1 428.8 L458.0 429.3 L459.8 428.8 L461.4 427.9 L463.3 426.8 L465.5 425.9 L467.9 425.6 L470.6 425.0 L473.6 424.5 L476.8 424.5 L479.8 424.9 L483.0 425.2 L486.3 425.2 L489.6 425.3 L492.2 426.8 L493.0 428.9 L494.1 430.9 L495.2 432.8 L496.2 434.6 L497.8 436.4 L499.7 438.0 L501.6 439.5 L503.6 440.9 L505.9 440.7 L508.5 439.8 L511.2 439.1 L513.7 438.5 L515.4 439.4 L516.4 440.9 L517.9 441.8 L519.5 443.0 L521.7 444.4 L524.7 444.8 L527.5 444.4 L529.3 445.1" fill="none" stroke="#222" stroke-width="1.05" stroke-linejoin="round" stroke-linecap="round"/><path d="M341.2 237.3 L342.6 236.5 L344.9 235.6 L347.2 234.4 L349.3 233.2 L350.4 231.5 L351.0 229.5 L351.8 227.8 L352.9 227.0" fill="none" stroke="#222" stroke-width="1.05" stroke-linejoin="round" stroke-linecap="round"/><path d="M386.4 229.2 L387.9 230.1 L389.6 231.9 L392.0 233.3 L394.6 233.6 L397.4 233.8 L400.6 233.9 L403.8 233.6 L406.5 233.0 L408.3 231.5 L410.0 229.8 L411.4 228.1 L412.4 227.0" fill="none" stroke="#222" stroke-width="1.05" stroke-linejoin="round" stroke-linecap="round"/></g><path d="M487.9 90.6 L486.3 170.2" fill="none" stroke="#444" stroke-width="0.7" stroke-linejoin="round" stroke-linecap="round"/><path d="M538.1 122.4 L500.3 153.3" fill="none" stroke="#444" stroke-width="0.7" stroke-linejoin="round" stroke-linecap="round"/><path d="M630.6 171.2 L623.7 224.9" fill="none" stroke="#444" stroke-width="0.7" stroke-linejoin="round" stroke-linecap="round"/><path d="M438.9 207.5 L432.5 237.0" fill="none" stroke="#444" stroke-width="0.7" stroke-linejoin="round" stroke-linecap="round"/><path d="M618.6 297.4 L616.6 300.3" fill="none" stroke="#444" stroke-width="0.7" stroke-linejoin="round" stroke-linecap="round"/><path d="M528.1 177.2 L540.1 186.1" fill="none" stroke="#444" stroke-width="0.7" stroke-linejoin="round" stroke-linecap="round"/><path d="M441.8 198.2 L441.3 195.7 L440.5 192.2 L439.8 188.2 L439.3 184.5 L439.1 181.3 L439.1 178.2 L439.3 175.1 L439.7 172.0 L440.5 168.9 L441.6 165.7 L442.8 162.5 L443.9 159.5 L444.9 156.7 L445.8 153.9 L446.8 151.3 L448.1 149.1 L449.5 147.4 L451.1 146.0 L452.9 144.9 L455.1 144.2 L457.9 143.8 L461.0 143.9 L464.4 144.3 L467.6 145.0 L470.8 146.2 L474.2 148.0 L477.3 149.7 L480.1 151.2 L482.5 152.1 L484.7 152.6 L486.5 153.2 L487.6 154.6 L487.5 156.8 L486.6 159.7 L485.7 162.8 L485.5 165.8 L486.2 168.7 L487.4 171.8 L489.1 174.6 L491.3 177.0 L494.2 178.9 L497.8 180.5 L501.5 181.7 L505.0 182.4 L508.4 182.7 L511.6 182.5 L514.7 182.0 L517.5 181.2 L520.1 179.8 L522.5 178.0 L524.4 176.2 L525.8 174.9" fill="none" stroke="#111" stroke-width="2.0" stroke-linejoin="round" stroke-linecap="round"/><path d="M441.8 198.2 L444.5 200.5 L448.2 203.8 L452.6 207.6 L457.2 211.5 L461.9 215.9 L467.0 220.9 L472.4 225.6 L478.0 229.4 L484.1 232.2 L490.5 234.2 L496.9 235.7 L503.0 236.9 L508.2 237.9 L512.8 238.5 L517.8 238.8 L523.8 238.6 L531.4 237.9 L540.1 236.8 L549.0 235.3 L557.0 233.6 L564.0 231.5 L570.3 229.0 L576.2 226.4 L582.0 224.0 L587.4 221.7 L592.5 219.5 L597.6 217.4 L602.8 215.7 L608.9 214.4 L615.5 213.5 L621.5 212.9 L625.7 212.4" fill="none" stroke="#111" stroke-width="2.0" stroke-linejoin="round" stroke-linecap="round"/><path d="M625.7 212.4 L622.1 213.7 L617.0 215.5 L611.5 217.6 L607.0 219.9 L604.0 222.1 L601.8 224.5 L599.6 227.2 L596.6 230.3 L592.6 234.0 L588.1 238.2 L583.2 242.6 L577.8 246.9 L572.1 251.2 L566.0 255.5 L559.6 259.7 L552.9 263.5 L545.8 267.0 L538.5 270.2 L531.0 273.1 L523.8 276.0 L516.5 279.1 L509.1 282.1 L502.3 284.7 L496.7 286.4 L493.0 286.9 L490.5 286.6 L488.5 285.6 L486.3 284.3 L483.8 283.0 L481.4 281.4 L478.8 279.1 L475.9 276.0 L472.5 271.8 L468.6 266.7 L464.8 261.0 L461.4 255.2 L458.4 249.4 L455.8 243.4 L453.4 237.1 L451.0 230.3 L448.4 222.0 L445.7 212.7 L443.4 204.2 L441.8 198.2" fill="none" stroke="#111" stroke-width="2.0" stroke-linejoin="round" stroke-linecap="round"/><path d="M6.5 0 L-5 -4.5 L-2.8 0 L-5 4.5 Z" fill="#111" transform="translate(449.7 153.3) rotate(-72)"/><path d="M6.5 0 L-5 -4.5 L-2.8 0 L-5 4.5 Z" fill="#111" transform="translate(440.2 178.3) rotate(95)"/><path d="M6.5 0 L-5 -4.5 L-2.8 0 L-5 4.5 Z" fill="#111" transform="translate(461.4 144.2) rotate(182)"/><path d="M6.5 0 L-5 -4.5 L-2.8 0 L-5 4.5 Z" fill="#111" transform="translate(478.0 150.4) rotate(25)"/><path d="M6.5 0 L-5 -4.5 L-2.8 0 L-5 4.5 Z" fill="#111" transform="translate(515.4 181.6) rotate(188)"/><path d="M6.5 0 L-5 -4.5 L-2.8 0 L-5 4.5 Z" fill="#111" transform="translate(482.2 231.1) rotate(22)"/><path d="M6.5 0 L-5 -4.5 L-2.8 0 L-5 4.5 Z" fill="#111" transform="translate(596.6 214.5) rotate(-12)"/><path d="M6.5 0 L-5 -4.5 L-2.8 0 L-5 4.5 Z" fill="#111" transform="translate(599.5 225.3) rotate(140)"/><path d="M6.5 0 L-5 -4.5 L-2.8 0 L-5 4.5 Z" fill="#111" transform="translate(480.1 278.9) rotate(-125)"/><path d="M6.5 0 L-5 -4.5 L-2.8 0 L-5 4.5 Z" fill="#111" transform="translate(458.5 247.7) rotate(-112)"/><rect x="440.1" y="56.7" width="95.6" height="33.8" fill="#fff" stroke="#333" stroke-width="0.9"/><text x="443.7" y="65.0" font-size="7.6" font-weight="700" letter-spacing="0.05" fill="#222">14,6–19 (март–июнь 49 г.)</text><text x="443.7" y="72.3" font-size="7.6" font-weight="400" letter-spacing="0.15" fill="#222">Исцеление хромого.</text><text x="443.7" y="79.6" font-size="7.6" font-weight="400" letter-spacing="0.15" fill="#222">Павла называли Ермием,</text><text x="443.7" y="86.9" font-size="7.6" font-weight="400" letter-spacing="0.15" fill="#222">Варнаву называли Зевсом</text><rect x="360.3" y="96.5" width="108.7" height="25.9" fill="#fff" stroke="#333" stroke-width="0.9"/><text x="363.9" y="104.8" font-size="7.6" font-weight="700" letter-spacing="0.05" fill="#222">13,14–50 (июль–сент. 48 г.)</text><text x="363.9" y="112.1" font-size="7.6" font-weight="400" letter-spacing="0.15" fill="#222">Павел проповедует в синагоге</text><text x="363.9" y="119.4" font-size="7.6" font-weight="400" letter-spacing="0.15" fill="#222">Изгнан иудеями</text><rect x="506.6" y="96.5" width="123.0" height="25.9" fill="#fff" stroke="#333" stroke-width="0.9"/><text x="510.2" y="104.8" font-size="7.6" font-weight="700" letter-spacing="0.05" fill="#222">13,51–14,5 (окт. 48 г.–февр. 49 г.)</text><text x="510.2" y="112.1" font-size="7.6" font-weight="400" letter-spacing="0.15" fill="#222">Проповедует в синагоге.</text><text x="510.2" y="119.4" font-size="7.6" font-weight="400" letter-spacing="0.15" fill="#222">Изгнан из города</text><rect x="588.2" y="137.4" width="85.2" height="33.8" fill="#fff" stroke="#333" stroke-width="0.9"/><text x="591.8" y="145.7" font-size="7.6" font-weight="700" letter-spacing="0.05" fill="#222">14,27 (сент. 49 г.)</text><text x="591.8" y="153.0" font-size="7.6" font-weight="400" letter-spacing="0.15" fill="#222">Отчет перед церковью.</text><text x="591.8" y="160.3" font-size="7.6" font-weight="400" letter-spacing="0.15" fill="#222">Написал Послание</text><text x="591.8" y="167.6" font-size="7.6" font-weight="400" letter-spacing="0.15" fill="#222">к Галатам. Осень 48 г.</text><rect x="503.2" y="186.1" width="79.2" height="18.9" fill="#fff" stroke="#333" stroke-width="0.9"/><text x="506.8" y="194.4" font-size="7.6" font-weight="700" letter-spacing="0.05" fill="#222">14,20–21 (июнь 49 г.)</text><text x="506.8" y="201.7" font-size="7.6" font-weight="400" letter-spacing="0.15" fill="#222">Много обращенных</text><rect x="339.4" y="201.1" width="90.0" height="27.1" fill="#fff" stroke="#333" stroke-width="0.9"/><text x="343.0" y="209.4" font-size="7.6" font-weight="700" letter-spacing="0.05" fill="#222">14,25 (авг. 49)</text><text x="343.0" y="216.7" font-size="7.6" font-weight="400" letter-spacing="0.15" fill="#222">Отправился в Антиохию</text><text x="343.0" y="224.0" font-size="7.6" font-weight="400" letter-spacing="0.15" fill="#222">Сирийскую</text><rect x="363.3" y="237.0" width="79.6" height="19.1" fill="#fff" stroke="#333" stroke-width="0.9"/><text x="366.9" y="245.3" font-size="7.6" font-weight="700" letter-spacing="0.05" fill="#222">14,25</text><text x="366.9" y="252.6" font-size="7.6" font-weight="400" letter-spacing="0.15" fill="#222">Проповедовал Слово</text><rect x="605.7" y="231.9" width="68.0" height="25.8" fill="#fff" stroke="#333" stroke-width="0.9"/><text x="609.3" y="240.2" font-size="7.6" font-weight="700" letter-spacing="0.05" fill="#222">13,3 (апрель 48 г.)</text><text x="609.3" y="247.5" font-size="7.6" font-weight="400" letter-spacing="0.15" fill="#222">Послан церковью</text><text x="609.3" y="254.8" font-size="7.6" font-weight="400" letter-spacing="0.15" fill="#222">Антиохии</text><rect x="553.1" y="271.0" width="65.4" height="26.4" fill="#fff" stroke="#333" stroke-width="0.9"/><text x="556.7" y="279.3" font-size="7.6" font-weight="700" letter-spacing="0.05" fill="#222">13,5 (апрель 48 г.)</text><text x="556.7" y="286.6" font-size="7.6" font-weight="400" letter-spacing="0.15" fill="#222">Проповедует</text><text x="556.7" y="293.9" font-size="7.6" font-weight="400" letter-spacing="0.15" fill="#222">в Саламине</text><rect x="455.6" y="302.3" width="80.7" height="33.3" fill="#fff" stroke="#333" stroke-width="0.9"/><text x="459.2" y="310.6" font-size="7.6" font-weight="700" letter-spacing="0.05" fill="#222">13,6</text><text x="459.2" y="317.9" font-size="7.6" font-weight="400" letter-spacing="0.15" fill="#222">Вариисус, лишенный</text><text x="459.2" y="325.2" font-size="7.6" font-weight="400" letter-spacing="0.15" fill="#222">Павлом зрения;</text><text x="459.2" y="332.5" font-size="7.6" font-weight="400" letter-spacing="0.15" fill="#222">проконсул уверовал</text><text x="205.4" y="103.1" font-size="10.8" font-weight="700" fill="#1a1a1a">Эгейское</text><text x="216.0" y="114.5" font-size="10.8" font-weight="700" fill="#1a1a1a">море</text><text x="121.8" y="138.7" font-size="10.8" font-weight="700" fill="#1a1a1a">Ахаия</text><text x="28.9" y="199.1" font-size="10.6" font-weight="700" fill="#1a1a1a">Адриатическое</text><text x="53.3" y="210.0" font-size="10.6" font-weight="700" fill="#1a1a1a">море</text><text x="312.5" y="120.4" font-size="10.8" font-weight="700" fill="#1a1a1a">Асия</text><text x="432.2" y="133.0" font-size="9" font-weight="400" fill="#1a1a1a">Антиохия</text><circle cx="450.5" cy="137.0" r="1.7" fill="#111"/><text x="506.6" y="156.7" font-size="9" font-weight="400" fill="#1a1a1a">Иконий</text><circle cx="499.7" cy="153.7" r="1.7" fill="#111"/><text x="379.8" y="177.8" font-size="10.5" font-weight="700" fill="#1a1a1a">Памфилия</text><text x="460.4" y="181.7" font-size="9" font-weight="400" fill="#1a1a1a">Листра</text><circle cx="485.7" cy="170.6" r="1.7" fill="#111"/><text x="533.1" y="177.8" font-size="9" font-weight="400" fill="#1a1a1a">Дервия</text><circle cx="526.5" cy="175.2" r="1.7" fill="#111"/><text x="398.3" y="198.7" font-size="9" font-weight="400" fill="#1a1a1a">Атталия</text><text x="450.5" y="198.7" font-size="9" font-weight="400" fill="#1a1a1a">Пергия</text><circle cx="443.5" cy="196.5" r="1.7" fill="#111"/><text x="631.6" y="215.6" font-size="9" font-weight="400" fill="#1a1a1a">Антиохия</text><circle cx="624.7" cy="212.6" r="1.7" fill="#111"/><text x="511.5" y="298.0" font-size="9" font-weight="400" fill="#1a1a1a">Пафос</text><circle cx="511.1" cy="284.1" r="1.7" fill="#111"/><text x="556.1" y="269.0" font-size="9" font-weight="400" fill="#1a1a1a">Саламин</text><circle cx="550.2" cy="265.6" r="2" fill="#111"/><text x="632.4" y="275.6" font-size="10.5" font-weight="700" fill="#1a1a1a">Сирия</text><text x="617.6" y="341.0" font-size="10" font-weight="700" fill="#1a1a1a">Израиль</text><text x="565.0" y="374.7" font-size="9" font-weight="400" fill="#1a1a1a">Кесария</text><circle cx="605.1" cy="372.7" r="1.7" fill="#111"/><text x="571.0" y="405.0" font-size="9" font-weight="400" fill="#1a1a1a">Иерусалим</text><circle cx="619.9" cy="401.4" r="1.7" fill="#111"/><text x="508.5" y="276.9" font-size="9.5" font-weight="700" fill="#1a1a1a" transform="rotate(-25 508.5 276.9)">Кипр</text><text x="221.1" y="284.9" font-size="10" font-weight="700" font-style="italic" fill="#1a1a1a" transform="rotate(6 221.1 284.9)">о. Крит</text><text x="103.1" y="326.5" font-size="10.6" font-weight="700" fill="#1a1a1a">Средиземное море</text><text x="25.4" y="423.7" font-size="11.2" font-weight="700" fill="#1a1a1a">Деяния 13,2 – 14,28 (апрель 48 г.–сентябрь 49 г.)</text></svg></div><div style="position:absolute;left:1237px;top:804px;width:682px;height:322px;background:#fff;overflow:hidden"><svg width="682" height="322" viewBox="0 0 682 322" style="position:absolute;left:0;top:0;font-family:'Liberation Serif',serif"><style>text{stroke:#222;stroke-width:0.22px}</style><rect x="5" y="3.5" width="673" height="330" fill="none" stroke="#8a8785" stroke-width="1.3"/><g><path d="M153.3 53.5 L153.8 54.3 L154.7 55.1 L155.8 55.7 L156.4 56.7 L156.0 58.2 L155.0 60.0 L153.7 61.5 L153.0 63.2 L153.7 64.5 L155.3 65.2 L157.0 66.1 L158.3 67.5 L159.4 69.3 L161.1 70.5 L163.0 71.4 L164.1 73.1 L165.2 74.4 L166.7 75.1 L168.1 75.4 L169.1 75.2 L169.8 75.0 L170.8 74.8 L171.4 74.1 L172.4 74.2" fill="none" stroke="#444" stroke-width="1.0" stroke-linejoin="round" stroke-linecap="round"/><path d="M170.9 67.1 L171.8 67.3 L173.1 67.8 L174.3 68.7 L175.2 69.6 L176.1 71.2 L176.9 73.4 L177.6 75.7 L178.6 77.5 L180.2 78.6 L181.8 79.7 L183.4 81.1 L185.3 81.7 L187.0 81.0 L188.3 79.8 L189.1 78.3 L189.3 77.5 L189.1 76.7 L188.4 75.4 L187.7 73.9 L186.9 72.5 L186.1 71.2 L185.2 69.8 L184.7 68.3 L183.5 67.9" fill="none" stroke="#444" stroke-width="1.0" stroke-linejoin="round" stroke-linecap="round"/><path d="M183.8 63.6 L184.7 64.6 L186.1 65.7 L187.9 66.3 L189.8 66.7 L191.9 66.5 L194.1 66.5 L196.0 67.4 L197.7 68.1 L199.6 68.2 L201.4 68.8 L202.2 70.1 L202.0 70.9 L202.2 71.6 L202.0 73.1 L201.0 74.2 L199.8 75.0 L198.2 75.4 L196.3 75.5 L194.5 76.0 L193.0 76.0 L191.8 75.4 L190.9 74.5 L190.3 73.4 L189.9 72.6" fill="none" stroke="#444" stroke-width="1.0" stroke-linejoin="round" stroke-linecap="round"/><path d="M180.3 44.0 L181.3 44.9 L182.1 46.5 L183.0 48.3 L183.7 50.2 L184.1 52.3 L185.3 54.0 L186.8 55.5 L188.2 56.8 L189.8 57.6 L191.3 58.5 L192.8 59.7 L194.6 60.0 L196.6 60.3 L198.7 60.9 L200.9 60.8 L202.8 61.2 L204.0 62.2 L205.3 62.8 L206.6 63.3 L207.9 63.9 L209.1 65.0 L210.3 66.2 L211.4 67.1 L212.2 67.9" fill="none" stroke="#444" stroke-width="1.0" stroke-linejoin="round" stroke-linecap="round"/><path d="M145.5 63.0 L145.4 64.2 L145.4 65.9 L146.1 67.7 L146.6 69.5 L147.3 71.5 L148.6 73.3 L149.5 75.3 L149.7 77.7 L150.9 79.4 L152.8 80.4 L154.2 81.9 L154.5 83.9 L154.9 85.7 L155.5 87.7 L155.3 89.9 L155.8 92.1 L157.3 93.9 L159.3 95.7 L161.1 97.5 L161.7 99.7 L161.2 101.4 L160.9 103.1 L160.5 104.7 L159.6 106.1 L158.3 107.1 L156.9 108.4 L156.0 109.9 L155.2 110.8 L155.0 111.9 L155.9 112.9 L156.7 114.2 L156.3 115.6 L155.9 117.2 L156.0 119.0 L155.7 120.7 L154.8 121.8 L153.2 123.1 L151.0 123.9 L148.8 123.8 L147.1 124.0 L145.9 125.0 L144.7 125.7 L143.7 126.0 L143.7 126.6 L145.7 126.5 L149.1 126.8 L152.5 127.5 L154.9 126.8" fill="none" stroke="#444" stroke-width="1.0" stroke-linejoin="round" stroke-linecap="round"/><path d="M164.2 122.4 L166.4 123.3 L169.0 124.2 L171.8 124.9 L174.4 125.8 L176.7 127.4 L178.8 129.4 L181.0 130.9 L183.3 131.9 L185.5 132.8 L187.0 134.4 L188.2 136.2 L189.8 138.0 L191.3 140.3 L193.0 142.8 L194.9 145.1 L196.3 147.4 L197.2 149.7 L198.3 151.4 L199.6 152.8 L200.5 154.1 L201.1 155.6 L201.9 156.9 L202.6 157.9 L202.5 158.3 L202.1 158.0 L201.1 157.9 L199.6 157.7 L198.2 156.6 L196.5 155.3 L194.4 153.9 L192.1 152.3 L189.9 150.7 L187.7 149.0 L185.2 147.5 L182.6 146.2 L180.4 144.1 L178.4 141.9 L175.9 140.4 L173.3 139.2 L170.9 137.8 L168.8 136.1 L166.6 134.5 L164.7 132.9 L162.9 131.5 L161.2 130.4 L159.8 129.3 L158.5 128.2 L157.9 126.8 L157.4 125.1 L157.1 123.2 L157.5 121.5 L158.1 120.6 L159.0 120.6 L160.5 120.9 L162.4 121.5 L160.1 121.6 L158.0 120.4" fill="none" stroke="#444" stroke-width="1.0" stroke-linejoin="round" stroke-linecap="round"/><path d="M123.0 144.4 L125.4 144.1 L128.8 144.5 L132.4 145.6 L135.6 146.3 L138.2 147.1 L140.5 148.5 L142.9 149.6 L145.3 150.6 L147.8 151.3 L150.1 152.4 L152.3 153.8 L154.7 154.7 L157.1 155.0 L159.6 154.9 L162.0 155.0 L164.5 155.1 L166.9 155.3 L169.2 156.1 L171.4 157.1 L173.8 157.8 L176.2 158.4 L178.8 159.0 L181.4 159.2 L183.7 159.7 L185.5 160.6 L187.2 161.3 L188.8 162.1 L190.0 163.3 L191.1 164.5 L192.4 165.6 L193.5 166.8 L194.2 168.6 L195.3 170.2 L197.3 171.4 L199.2 172.6 L200.0 174.3 L200.3 175.9 L200.9 177.1 L201.0 178.3 L200.9 179.3 L200.7 180.4 L200.0 181.4 L199.2 182.7 L197.8 183.3 L196.2 183.0 L194.3 182.3 L192.7 181.4 L191.5 180.9" fill="none" stroke="#444" stroke-width="1.0" stroke-linejoin="round" stroke-linecap="round"/><path d="M123.1 149.8 L124.8 150.2 L127.1 151.0 L129.8 151.7 L132.5 152.5 L135.0 153.7 L137.7 155.2 L140.6 156.7 L143.6 157.3 L146.8 157.8 L150.1 158.5 L153.0 159.0 L154.9 160.2" fill="none" stroke="#444" stroke-width="1.0" stroke-linejoin="round" stroke-linecap="round"/><path d="M154.8 176.2 L155.9 176.8 L157.6 177.2 L159.5 178.0 L161.3 179.1 L163.5 180.2 L166.0 180.9 L168.5 181.8 L170.6 182.8 L172.4 184.1 L173.6 186.0 L174.7 187.6 L175.5 188.9 L174.8 189.6 L173.7 190.5 L172.4 191.8 L170.8 192.3 L169.2 192.1 L167.4 192.1 L165.7 192.7 L164.2 193.5 L162.8 195.0 L161.8 197.1 L161.3 199.4 L160.9 201.5 L160.3 203.3 L159.4 204.9 L158.2 206.3 L157.4 208.0 L157.7 210.2 L158.5 212.4 L159.2 214.5 L159.6 216.0" fill="none" stroke="#444" stroke-width="1.0" stroke-linejoin="round" stroke-linecap="round"/><path d="M264.0 65.5 L265.5 63.5 L267.7 60.6 L270.3 57.7 L272.8 55.3 L275.4 53.7 L277.8 52.0 L279.8 49.8 L282.0 48.2 L284.6 47.4 L287.1 47.1 L289.5 46.6 L291.8 45.4 L294.0 44.4 L296.3 43.7 L298.7 42.9 L301.4 42.3 L304.6 41.5 L308.3 41.2 L311.8 41.1 L314.1 40.8" fill="none" stroke="#444" stroke-width="1.0" stroke-linejoin="round" stroke-linecap="round"/><path d="M260.5 90.4 L259.5 91.5 L258.2 93.3 L257.5 95.5 L258.3 97.2 L259.8 97.3 L261.6 96.6 L263.8 95.7 L266.3 94.5 L269.4 94.1 L273.0 94.3 L276.5 94.5 L279.0 95.1 L280.4 96.0 L281.4 97.0 L281.7 98.3 L282.1 99.7 L282.0 101.3 L280.7 102.8 L279.0 104.3 L278.6 106.2 L279.3 107.7 L279.8 109.5 L280.6 111.3 L281.9 112.6 L283.1 114.0 L284.1 115.5 L284.8 117.2 L285.4 118.9 L286.6 120.3 L287.7 121.9 L288.1 123.6 L288.4 125.1 L287.9 126.7 L286.4 128.1 L284.9 129.8 L283.7 131.5 L282.9 133.1 L282.2 134.7 L281.4 136.2 L280.5 137.9 L280.0 140.2 L280.4 142.6 L281.7 145.0 L282.6 147.4 L283.4 149.9 L283.7 152.6 L283.9 155.4 L285.0 157.5 L286.8 158.4 L288.6 158.7 L290.3 159.3 L291.8 160.4 L293.5 161.1 L295.4 161.2 L297.1 161.4 L298.2 161.8" fill="none" stroke="#444" stroke-width="1.0" stroke-linejoin="round" stroke-linecap="round"/><path d="M263.2 103.8 L265.8 104.2 L268.3 105.2 L270.9 106.2 L272.9 107.5 L274.4 109.3 L275.7 111.6 L276.3 113.9 L276.1 115.9 L274.5 117.3 L272.0 118.5 L269.0 119.2 L266.3 119.0 L263.7 118.3 L261.0 117.1 L258.6 115.6 L256.6 114.2 L254.8 113.3 L253.6 111.9 L253.4 110.5 L253.8 109.5 L255.3 108.2 L257.8 106.8 L260.2 104.6 L258.6 105.9 L257.0 107.2 L255.1 108.0 L253.6 109.3" fill="none" stroke="#444" stroke-width="1.0" stroke-linejoin="round" stroke-linecap="round"/><path d="M258.1 136.1 L259.8 136.2 L261.2 137.5 L262.2 139.3 L262.9 141.1 L262.6 143.3 L262.4 146.0 L262.7 148.9 L261.9 150.9 L260.6 151.8 L259.4 152.9 L257.9 153.0 L256.9 152.2 L255.8 151.1 L254.5 149.6 L253.1 147.9 L252.6 145.9 L252.4 143.9 L252.0 141.6 L252.5 139.4 L253.8 138.1 L255.0 137.5 L255.9 136.4 L257.2 135.6 L255.4 136.7 L253.6 137.9" fill="none" stroke="#444" stroke-width="1.0" stroke-linejoin="round" stroke-linecap="round"/><path d="M268.0 134.9 L269.5 134.2 L271.6 132.7 L274.3 131.8 L276.7 132.6 L278.0 135.0 L278.6 138.4 L279.0 141.8 L279.2 144.4 L278.4 146.4 L276.5 147.7 L274.3 147.9 L273.1 147.1 L272.6 146.0 L271.2 144.3 L269.6 142.6 L269.5 141.1" fill="none" stroke="#444" stroke-width="1.0" stroke-linejoin="round" stroke-linecap="round"/><path d="M282.1 172.1 L283.3 172.0 L285.0 172.2 L286.9 172.4 L288.7 172.8 L290.2 173.6 L291.8 174.4 L293.5 175.1 L295.2 175.8 L296.4 177.1 L297.8 178.1 L299.6 178.5 L301.4 179.2 L303.7 180.1 L306.6 180.2 L309.2 180.1 L310.9 180.9" fill="none" stroke="#444" stroke-width="1.0" stroke-linejoin="round" stroke-linecap="round"/><path d="M294.7 215.9 L295.2 213.6 L296.7 210.4 L298.0 206.8 L298.8 203.4 L299.8 200.4 L300.6 197.3 L301.2 194.5 L301.4 192.1 L300.9 189.8 L299.7 187.6 L298.0 186.4 L296.6 185.7" fill="none" stroke="#444" stroke-width="1.0" stroke-linejoin="round" stroke-linecap="round"/><path d="M244.8 55.3 L245.1 55.5 L245.0 56.1 L244.9 56.7 L244.8 57.2 L244.3 56.9 L243.7 56.6 L243.0 56.6 L242.7 56.5 L242.3 56.1 L242.1 55.5 L242.1 54.7 L242.4 53.8 L243.2 53.8 L244.2 54.0 L244.9 55.4 L242.4 54.3" fill="none" stroke="#444" stroke-width="1.0" stroke-linejoin="round" stroke-linecap="round"/><path d="M252.6 66.5 L253.3 66.8 L253.8 67.7 L253.4 68.5 L253.4 69.1 L252.7 70.0 L251.3 70.4 L249.9 70.6 L248.8 70.7 L248.4 70.0 L248.4 69.0 L248.3 68.1 L248.3 67.5 L249.1 67.3 L250.3 66.7 L251.8 66.3 L248.0 67.1" fill="none" stroke="#444" stroke-width="1.0" stroke-linejoin="round" stroke-linecap="round"/><path d="M234.4 74.5 L236.2 74.3 L237.7 74.8 L238.9 76.0 L239.2 77.6 L238.6 79.2 L237.7 81.3 L236.0 82.9 L234.4 83.4 L233.0 83.7 L231.4 83.3 L229.8 82.4 L228.5 81.6 L227.2 80.8 L226.1 80.0 L225.0 79.3 L224.8 78.0 L226.6 77.1 L229.3 75.9 L232.2 74.8 L230.4 75.6 L228.6 76.6 L226.9 77.7 L224.9 78.2" fill="none" stroke="#444" stroke-width="1.0" stroke-linejoin="round" stroke-linecap="round"/><path d="M268.7 175.4 L269.8 175.9 L270.4 177.1 L269.9 178.2 L269.4 179.2 L268.0 180.2 L265.7 181.0 L263.3 181.8 L261.4 181.9 L260.5 181.1 L259.8 180.0 L259.4 178.7 L260.0 177.7 L261.5 176.5 L264.0 175.2 L267.1 176.3 L264.8 177.1 L262.4 177.5 L260.0 177.7" fill="none" stroke="#444" stroke-width="1.0" stroke-linejoin="round" stroke-linecap="round"/><path d="M208.2 184.9 L208.3 185.9 L209.1 187.2 L209.9 188.6 L209.3 189.4 L209.0 190.0 L208.4 191.1 L207.4 191.2 L206.7 191.2 L206.2 190.4 L205.8 189.0 L205.0 187.6 L205.1 186.6 L205.9 186.3 L206.6 185.6 L207.2 184.5 L205.0 186.5" fill="none" stroke="#444" stroke-width="1.0" stroke-linejoin="round" stroke-linecap="round"/><path d="M234.8 199.7 L235.8 199.9 L236.6 201.0 L236.6 202.3 L236.5 203.3 L236.1 204.4 L235.0 205.0 L233.7 205.0 L232.6 204.9 L232.1 204.2 L231.8 203.2 L231.2 202.4 L231.1 201.5 L231.9 200.8 L233.2 200.1 L234.2 199.1 L231.3 201.6" fill="none" stroke="#444" stroke-width="1.0" stroke-linejoin="round" stroke-linecap="round"/><path d="M244.6 197.1 L245.3 197.9 L246.2 199.7 L247.1 201.8 L246.7 203.5 L245.4 203.8 L244.3 204.2 L243.2 204.9 L241.9 204.9 L241.2 203.7 L241.0 201.8 L240.9 199.9 L241.0 198.6 L241.9 197.8 L243.2 196.9 L244.8 196.6 L242.8 197.5 L240.9 198.4" fill="none" stroke="#444" stroke-width="1.0" stroke-linejoin="round" stroke-linecap="round"/><path d="M226.0 172.2 L228.0 172.7 L230.4 173.3 L232.3 174.3 L233.3 175.7 L233.9 176.9 L234.6 177.6 L235.0 178.5 L234.5 179.0 L233.4 179.4 L231.7 179.2 L229.9 178.2 L228.2 177.5 L226.5 176.9 L224.6 176.0 L222.8 175.0 L221.4 174.0 L220.6 172.7 L220.5 171.3 L220.1 170.5 L220.1 169.2 L221.3 169.2 L222.8 170.2 L224.8 170.1 L222.5 170.0 L220.1 169.8" fill="none" stroke="#444" stroke-width="1.0" stroke-linejoin="round" stroke-linecap="round"/><path d="M296.4 207.8 L297.7 207.2 L299.5 206.3 L301.4 205.4 L302.9 205.2 L304.2 205.6 L305.9 205.8 L307.1 206.8 L307.2 207.9 L306.9 209.6 L306.4 212.1 L305.7 214.6 L304.6 216.0" fill="none" stroke="#444" stroke-width="1.0" stroke-linejoin="round" stroke-linecap="round"/><path d="M309.1 45.1 L310.9 45.2 L311.8 46.5 L311.5 47.9 L310.9 48.6 L309.4 49.2 L307.1 49.6 L304.7 49.8 L302.7 50.0 L301.5 49.1 L300.9 47.7 L300.5 46.2 L301.3 45.2 L302.9 45.3 L305.2 44.9 L307.6 44.9 L305.6 45.5 L303.5 45.5 L301.4 45.6" fill="none" stroke="#444" stroke-width="1.0" stroke-linejoin="round" stroke-linecap="round"/><path d="M371.6 47.5 L373.0 48.1 L373.9 49.4 L374.2 50.3 L374.3 50.4 L373.0 50.8 L370.8 51.6 L368.5 52.3 L366.8 52.5 L365.5 52.3 L364.6 51.4 L364.8 50.3 L365.4 50.1 L366.4 49.5 L367.9 48.2 L370.0 48.3 L367.6 49.1 L365.1 49.5" fill="none" stroke="#444" stroke-width="1.0" stroke-linejoin="round" stroke-linecap="round"/><path d="M314.2 40.5 L317.0 40.9 L319.0 41.3 L320.9 42.1 L323.1 42.9 L325.4 43.4 L327.7 43.9 L330.0 44.0 L332.4 44.4 L334.6 45.6 L337.1 46.5 L339.9 46.4 L342.4 46.7 L344.8 47.8 L346.9 48.5 L349.2 49.1 L352.9 49.2 L355.9 48.3 L358.7 46.8 L361.8 45.3 L365.4 44.4 L369.1 43.2 L370.9 41.9 L373.0 41.2 L375.5 41.5 L377.9 41.1 L379.9 40.4 L381.9 40.0 L384.0 39.9 L386.5 40.1 L389.0 40.0 L391.4 39.3 L393.7 39.3 L396.0 39.7 L398.3 39.7 L400.6 39.6 L403.0 39.2" fill="none" stroke="#444" stroke-width="1.0" stroke-linejoin="round" stroke-linecap="round"/><path d="M266.3 36.0 L267.6 37.8 L270.0 39.9 L273.0 41.5 L275.9 42.5 L279.3 42.2 L283.1 40.9 L286.5 39.2 L288.6 37.6" fill="none" stroke="#444" stroke-width="1.0" stroke-linejoin="round" stroke-linecap="round"/><path d="M53.7 96.5 L55.2 97.8 L57.3 99.9 L59.7 102.0 L62.3 103.2 L64.5 102.8 L66.3 101.5 L67.4 100.0 L68.3 99.3 L68.7 100.2 L68.9 101.9 L69.4 103.9 L70.3 105.3 L71.5 106.6 L72.8 108.3 L74.4 109.6 L76.5 110.3 L78.5 111.5 L80.1 113.2 L81.5 115.0 L82.8 116.7 L84.3 118.0 L86.2 118.4 L87.8 118.7 L89.3 119.4 L91.0 120.2 L93.0 120.1 L94.7 119.3 L96.3 119.9 L95.8 120.7 L94.8 121.1 L93.7 122.1 L92.5 123.6 L90.4 124.5 L87.7 124.7 L85.1 124.9 L83.0 125.0 L81.5 125.2 L80.9 125.9 L80.8 127.1 L80.2 128.3 L79.0 129.8 L77.4 131.5 L75.8 133.0 L74.9 134.2" fill="none" stroke="#444" stroke-width="1.0" stroke-linejoin="round" stroke-linecap="round"/><path d="M117.8 143.3 L119.4 143.8 L121.9 143.9 L124.6 144.5 L127.3 145.9 L130.2 147.0 L133.6 147.7 L136.8 149.1 L140.0 150.7 L143.3 151.5 L146.7 152.1 L149.8 153.4 L152.8 155.4 L156.2 156.4 L159.9 156.8 L163.5 157.5 L167.3 158.0 L171.1 158.7 L173.1 159.5 L175.1 159.6 L177.2 158.9 L179.2 158.8 L181.2 159.3 L183.2 159.7 L185.2 160.0 L187.3 160.0 L189.3 159.4 L191.2 158.6 L193.2 158.1 L195.2 158.0 L199.1 158.0 L201.2 158.2 L203.2 158.0 L205.3 157.9 L207.4 157.8 L210.9 156.9 L213.5 156.5" fill="none" stroke="#444" stroke-width="1.0" stroke-linejoin="round" stroke-linecap="round"/><path d="M117.9 146.5 L120.2 147.0 L123.5 147.2 L127.1 148.2 L130.4 149.3 L133.7 149.9 L137.2 150.4 L140.3 151.7 L143.4 153.2 L146.9 154.2 L150.4 155.6 L153.5 157.3 L155.8 158.6 L157.2 159.5 L158.2 160.2 L158.8 160.9 L159.3 161.3" fill="none" stroke="#444" stroke-width="1.0" stroke-linejoin="round" stroke-linecap="round"/><path d="M82.8 163.0 L84.0 163.8 L85.5 164.8 L86.7 166.2 L87.7 167.6 L88.5 169.2 L89.2 171.0 L89.5 172.8 L89.2 174.0 L88.5 175.1 L87.3 176.1 L85.7 176.6 L84.2 176.1 L83.1 175.0 L82.0 173.7 L80.7 172.3 L79.6 170.9 L78.5 169.4 L77.9 167.6 L78.1 165.8 L78.6 165.0 L79.1 164.3 L80.1 163.1 L81.8 163.3 L78.1 164.5" fill="none" stroke="#444" stroke-width="1.0" stroke-linejoin="round" stroke-linecap="round"/><path d="M95.4 161.5 L96.4 162.1 L97.5 163.3 L98.6 164.7 L99.1 166.2 L97.9 167.0 L96.6 168.2 L96.0 169.7 L95.7 170.8 L96.6 171.8 L98.2 172.9 L100.1 174.1 L102.2 175.4 L104.3 177.3 L106.4 179.8 L108.5 182.1 L109.9 183.6" fill="none" stroke="#444" stroke-width="1.0" stroke-linejoin="round" stroke-linecap="round"/><path d="M134.2 185.1 L134.5 186.9 L135.3 189.3 L136.0 192.0 L136.5 194.8 L136.7 197.8 L136.2 201.1 L135.7 204.5 L135.9 207.5 L136.4 210.1 L136.3 212.6 L136.1 215.0 L136.9 217.2 L138.6 218.9 L140.2 221.1 L141.7 223.1 L143.4 223.5 L143.8 222.6 L144.2 220.9 L145.1 218.8 L146.8 218.0 L148.3 218.7 L149.8 220.2 L151.1 222.2 L152.8 223.6 L154.5 224.7 L155.9 226.2 L157.4 227.6 L159.1 228.6 L161.2 229.4 L163.2 230.3 L164.7 230.9 L165.0 231.4 L165.4 230.3 L165.3 227.8 L164.5 225.2 L163.0 223.0 L161.3 221.5 L159.3 220.4 L157.1 219.2 L155.6 217.3 L154.8 215.0 L154.0 212.5 L153.0 210.1 L152.6 207.6 L152.7 205.0 L152.9 202.6 L153.0 200.3 L153.0 198.0 L153.9 195.9 L155.8 194.7 L157.7 193.4 L159.4 191.8 L161.5 190.4 L164.0 189.4 L166.6 188.7 L168.9 188.7 L171.0 188.8 L172.9 188.3 L174.7 188.0 L175.6 186.8 L175.3 185.1 L174.8 182.6 L173.5 180.4 L171.8 179.3 L170.5 178.7 L169.0 178.0 L167.4 177.2 L165.7 177.1 L163.9 177.3 L162.0 177.6 L160.4 178.4 L159.3 178.8" fill="none" stroke="#444" stroke-width="1.0" stroke-linejoin="round" stroke-linecap="round"/><path d="M159.6 231.1 L160.3 232.6 L161.4 234.3 L162.0 236.3 L162.2 237.6 L161.7 238.9 L160.5 240.0 L159.0 240.7 L157.9 240.4 L157.4 239.9 L156.4 239.4 L155.1 238.8 L154.3 237.8 L154.2 236.6 L154.2 235.3 L154.3 234.1 L154.5 233.0 L155.5 232.3 L156.8 231.8 L158.2 231.3 L156.5 232.4 L154.5 233.0" fill="none" stroke="#444" stroke-width="1.0" stroke-linejoin="round" stroke-linecap="round"/><path d="M188.9 168.9 L188.8 170.4 L188.6 172.6 L189.3 174.7 L191.0 175.9 L192.6 176.8 L194.3 178.2 L196.1 179.0 L197.6 178.9 L198.9 178.3 L199.8 177.0 L199.8 175.3 L200.1 174.1 L200.2 172.9 L199.7 171.6 L199.3 170.3 L199.1 169.3" fill="none" stroke="#444" stroke-width="1.0" stroke-linejoin="round" stroke-linecap="round"/><path d="M146.7 125.2 L145.8 125.1 L144.6 125.2 L143.7 125.4 L143.4 125.4 L144.3 125.5 L146.0 125.6 L148.0 125.8 L149.8 126.2 L151.5 126.7 L153.3 126.7 L155.0 126.3 L156.1 126.3" fill="none" stroke="#444" stroke-width="1.0" stroke-linejoin="round" stroke-linecap="round"/><path d="M159.2 128.2 L161.5 129.5 L164.8 131.4 L166.7 132.2 L168.6 133.1 L171.7 135.0 L174.4 136.3 L177.1 137.0 L179.5 137.2 L181.6 137.3 L183.6 137.2 L185.3 136.3 L186.6 135.0 L188.0 134.2 L189.5 134.7 L191.1 135.5 L193.0 136.1 L194.7 137.1 L195.5 138.9 L196.2 140.8 L197.5 142.5 L198.8 144.0 L200.2 145.6 L201.7 147.1 L203.0 148.5 L204.5 149.8 L205.5 151.2 L206.1 152.8 L206.6 154.1 L207.1 154.9" fill="none" stroke="#444" stroke-width="1.0" stroke-linejoin="round" stroke-linecap="round"/><path d="M307.6 223.5 L310.7 224.8 L313.0 225.2 L315.4 225.3 L318.0 225.8 L320.6 226.4 L323.1 226.6 L325.5 227.3 L327.6 228.6 L329.7 229.4 L332.0 229.5 L334.2 229.6 L336.4 229.8 L338.7 230.1 L341.1 230.6 L343.4 231.5 L345.1 232.6 L347.0 233.2 L349.0 233.7 L351.0 234.7 L353.1 235.7 L354.9 237.0 L356.7 238.2 L358.9 238.6 L360.8 239.4 L362.6 240.6 L364.3 242.1" fill="none" stroke="#444" stroke-width="1.0" stroke-linejoin="round" stroke-linecap="round"/><path d="M188.9 263.2 L191.2 264.7 L193.7 265.4 L196.0 265.6 L198.2 266.2 L200.3 266.8 L202.7 267.1 L204.9 268.0 L206.9 269.4 L209.0 269.9 L211.1 270.5 L213.2 271.7 L216.0 271.9 L218.8 271.4 L221.5 270.7 L224.2 270.9 L226.9 271.6 L229.5 271.4 L232.1 270.9 L234.8 271.0 L237.5 271.2 L240.3 271.2 L243.1 271.8 L245.7 273.0 L248.4 273.6 L251.2 273.5 L253.8 273.8 L256.4 274.4 L259.1 274.9 L261.8 274.8 L264.5 275.1 L267.2 276.0 L269.4 276.6 L271.5 277.5 L273.6 278.2 L274.4 279.6 L273.1 282.0 L270.2 283.6 L267.1 284.7 L263.5 286.1 L261.3 286.9 L259.1 287.0 L256.6 286.7 L254.2 286.5 L251.7 287.0 L249.3 287.4 L246.7 287.4 L244.0 287.1 L241.3 287.4 L238.6 288.0 L235.8 288.1 L233.1 288.1 L230.3 288.6 L227.6 289.3 L224.9 288.8 L222.2 287.9 L219.4 287.7 L216.6 287.7 L213.8 287.2 L211.1 286.6 L208.7 285.6 L206.1 285.1 L203.5 284.6 L201.0 284.2 L198.5 283.7 L196.1 282.8 L193.8 282.1 L191.6 281.2 L188.0 279.6 L184.9 278.5 L182.8 277.0 L181.4 275.2 L179.9 273.9 L178.8 272.3 L178.2 270.4 L178.3 268.7 L179.5 267.7 L180.7 266.4 L182.2 264.4 L185.1 263.9 L182.9 264.8 L180.9 265.9 L179.0 267.3" fill="none" stroke="#444" stroke-width="1.0" stroke-linejoin="round" stroke-linecap="round"/><path d="M414.8 3.1 L416.9 5.4 L418.1 7.2 L419.4 9.0 L420.7 10.7 L421.7 12.6 L422.2 15.2 L420.5 17.6 L418.6 18.5 L416.6 19.1 L414.4 20.0 L412.2 20.9 L410.1 21.6 L408.2 22.6 L406.2 23.4 L404.1 24.1 L402.0 24.7 L399.8 25.2 L397.8 25.4 L395.7 25.3 L393.1 26.3" fill="none" stroke="#444" stroke-width="1.0" stroke-linejoin="round" stroke-linecap="round"/><path d="M47.4 3.1 L47.1 5.4 L46.0 8.4 L45.0 11.7 L44.9 14.7 L46.9 17.6 L48.6 19.0 L49.7 20.9 L51.0 22.5 L52.5 24.0 L54.9 25.6" fill="none" stroke="#444" stroke-width="1.0" stroke-linejoin="round" stroke-linecap="round"/><path d="M73.7 36.4 L73.6 39.3 L73.2 42.1 L72.6 44.1 L72.2 46.1 L72.1 48.2 L71.9 50.2 L71.5 52.4 L71.4 54.5 L70.8 56.7 L70.5 58.8 L70.3 61.2 L70.1 63.5 L70.4 65.9 L70.2 68.3 L69.7 70.7 L68.6 74.2 L67.3 77.1 L66.4 80.2 L66.7 83.9 L67.6 87.6 L68.7 91.2 L70.3 94.5 L72.1 97.5 L74.8 100.0 L77.9 102.3 L79.4 103.8 L80.7 105.6 L82.5 107.4 L84.8 108.4 L87.5 109.3 L89.9 110.7 L92.3 112.1 L94.5 113.6 L96.6 115.1 L99.0 116.0 L100.8 117.1 L102.3 118.8 L105.8 120.6 L109.4 121.7 L112.6 123.3 L115.8 125.1 L119.4 126.2 L122.1 127.8 L124.0 129.2" fill="none" stroke="#444" stroke-width="1.0" stroke-linejoin="round" stroke-linecap="round"/><path d="M423.3 155.9 L422.7 157.9 L421.6 159.0 L420.1 159.5 L418.4 159.2 L417.2 157.5 L416.5 154.6 L415.4 151.9 L414.2 149.7 L413.6 147.0 L414.1 143.9 L415.3 141.6 L416.7 141.2 L417.9 143.7 L418.5 146.0 L419.9 147.9 L420.8 150.2 L422.1 152.2 L420.9 150.6 L419.4 149.0 L418.8 147.1 L418.1 145.1 L416.8 143.5 L416.5 141.4" fill="none" stroke="#444" stroke-width="1.0" stroke-linejoin="round" stroke-linecap="round"/><path d="M450.1 165.8 L450.0 167.2 L448.9 168.6 L447.1 169.6 L445.3 170.1 L443.1 169.0 L440.8 166.7 L438.5 164.3 L437.1 162.2 L436.4 160.1 L436.7 157.6 L438.2 155.8 L440.0 155.5 L442.7 156.9 L444.5 158.2 L446.1 159.8 L447.5 161.5 L448.7 163.6 L447.1 161.8 L445.7 159.8 L443.9 158.3 L441.9 157.0 L439.8 155.8" fill="none" stroke="#444" stroke-width="1.0" stroke-linejoin="round" stroke-linecap="round"/><path d="M302.9 263.0 L302.9 264.7 L302.2 266.5 L301.7 267.9 L300.6 268.9 L299.5 268.3 L298.6 266.8 L298.0 264.8 L298.1 263.0 L298.7 261.2 L298.8 259.1 L298.8 257.1 L299.9 256.1 L300.5 257.1 L300.9 259.1 L302.2 261.0 L301.1 258.6 L299.5 256.5" fill="none" stroke="#444" stroke-width="1.0" stroke-linejoin="round" stroke-linecap="round"/><path d="M328.1 235.3 L330.4 235.8 L332.5 237.0 L334.0 238.7 L335.5 240.5 L337.0 243.8 L337.3 245.5 L335.0 246.0 L332.8 246.1 L330.6 246.4 L328.0 245.9 L325.4 245.4 L323.1 244.9 L320.8 243.7 L318.7 242.2 L316.2 241.0 L314.6 239.8 L313.1 238.2 L311.4 237.0 L309.5 235.4 L307.7 233.5 L306.7 231.3 L309.9 231.2 L311.9 231.3 L314.1 231.0 L316.2 231.0 L318.4 231.9 L320.7 232.7 L323.0 233.2 L320.9 232.9 L318.9 232.5 L316.9 232.7 L314.8 232.7 L312.8 232.5 L310.7 232.5 L308.7 232.6 L306.7 231.3" fill="none" stroke="#444" stroke-width="1.0" stroke-linejoin="round" stroke-linecap="round"/><path d="M501.5 95.9 L503.5 98.6 L504.5 100.9 L505.9 102.9 L507.5 104.9 L508.5 107.1 L509.6 110.0 L509.6 111.8 L508.2 112.6 L506.6 112.3 L505.3 111.4 L503.1 109.0 L501.5 107.3 L500.2 105.4 L499.0 103.5 L498.0 101.4 L497.0 98.2 L497.1 96.0 L498.5 94.7 L500.3 95.1 L498.9 96.7 L497.4 98.2" fill="none" stroke="#444" stroke-width="1.0" stroke-linejoin="round" stroke-linecap="round"/><path d="M341.1 207.0 L342.9 207.6 L345.5 208.1 L348.5 208.5 L351.4 209.2 L354.5 209.4 L358.0 209.6 L361.2 210.5 L363.7 211.7 L365.4 213.4 L366.0 215.6 L366.3 217.8 L366.6 219.7 L366.5 221.6 L365.9 223.6 L365.1 224.9 L365.5 226.2 L367.8 227.6 L371.3 229.2 L373.3 229.8 L375.2 230.8 L379.0 231.9 L382.4 231.9 L385.6 231.3 L389.0 230.4 L392.6 229.3 L394.9 229.2 L397.3 229.2 L399.6 228.2 L401.8 227.0 L404.1 226.1 L406.3 225.0 L408.2 224.1 L410.4 223.5 L413.1 221.2 L414.8 218.4 L416.3 215.7 L417.7 212.9 L418.0 209.6 L417.4 206.1 L416.8 203.0 L417.0 200.7 L418.4 199.4 L420.5 199.4 L422.5 200.2 L423.9 199.9" fill="none" stroke="#444" stroke-width="1.0" stroke-linejoin="round" stroke-linecap="round"/><path d="M463.6 209.4 L464.9 211.4 L467.3 213.8 L469.8 216.7 L472.4 219.4 L474.3 220.5 L476.0 221.8 L478.1 223.0 L480.5 223.4 L482.9 223.7 L485.1 224.7 L487.3 225.3 L489.5 225.3 L491.7 224.9 L493.8 225.2 L496.0 224.7 L498.2 224.1 L500.4 223.6 L502.7 223.2 L504.8 222.4 L506.9 221.7 L509.0 221.0 L511.2 220.6 L513.3 219.7 L515.0 218.3 L516.9 217.3 L519.0 216.7 L522.5 214.7 L525.6 212.8 L528.4 210.8 L531.0 208.7 L533.4 206.4 L535.1 203.6 L536.2 200.6 L537.8 197.9 L539.7 195.6 L541.6 193.5 L543.6 191.4 L545.9 189.8 L548.4 188.8 L550.9 187.6 L553.5 186.2 L556.3 185.5 L558.9 185.5 L560.7 186.5 L561.9 187.9 L563.4 188.9 L565.6 189.4 L569.3 189.5 L571.7 189.8 L574.1 190.1 L576.4 189.6 L578.9 189.6 L580.9 189.4 L582.8 188.6 L585.5 186.7 L588.3 184.6 L590.1 182.2 L591.2 179.6 L592.9 178.4 L594.6 178.2 L595.9 178.0 L596.7 177.4" fill="none" stroke="#444" stroke-width="1.0" stroke-linejoin="round" stroke-linecap="round"/><path d="M596.4 198.2 L597.4 200.0 L598.5 202.7 L599.7 205.8 L600.3 209.4 L599.7 211.4 L599.3 213.4 L599.2 215.8 L599.3 218.2 L599.2 220.6 L598.7 222.9 L597.9 226.6 L597.3 229.1 L597.1 231.1 L597.3 232.7 L596.7 233.6" fill="none" stroke="#444" stroke-width="1.0" stroke-linejoin="round" stroke-linecap="round"/><path d="M603.4 247.4 L605.1 251.1 L606.3 253.7 L607.1 256.5 L606.8 258.7 L606.6 260.9 L607.3 262.8 L608.4 265.4 L608.8 268.1 L608.5 270.4 L608.4 272.7 L607.8 274.9 L606.8 277.0 L606.4 279.1 L606.5 281.4 L606.1 283.4 L605.9 285.5 L605.4 289.1 L604.2 292.0 L602.5 295.1 L601.9 297.1 L602.1 299.3 L601.7 302.2 L600.8 305.0 L599.8 307.1 L598.9 309.3 L598.4 311.5 L597.6 313.6 L596.5 315.5 L595.8 317.6 L595.7 319.9 L594.9 322.0" fill="none" stroke="#444" stroke-width="1.0" stroke-linejoin="round" stroke-linecap="round"/><path d="M489.7 265.0 L492.9 263.6 L496.4 261.7 L499.4 259.5 L501.8 257.8 L502.8 256.5 L502.5 255.7 L502.0 254.6 L503.2 253.5 L506.3 253.4 L508.4 253.8 L510.5 253.5 L512.7 253.0 L514.9 252.6 L516.8 252.2 L518.7 251.9 L522.0 251.2 L525.0 250.0 L528.0 248.7 L530.8 247.1 L533.8 245.3 L536.9 243.7 L539.9 241.8 L542.8 239.9 L546.2 237.9 L548.2 237.4 L550.4 237.1 L553.5 235.4 L555.9 235.6 L555.3 236.5 L553.1 237.6 L550.4 239.5 L548.2 242.1 L545.6 244.7 L544.2 246.3 L542.7 248.0 L541.2 249.5 L540.2 251.4 L538.5 254.4 L537.2 257.0 L536.9 259.7 L537.1 262.2 L536.1 264.6 L533.5 266.4 L530.2 268.2 L528.6 269.5 L527.0 270.8 L523.8 272.9 L521.2 275.3 L519.2 278.1 L516.9 280.6 L514.3 282.6 L511.7 284.7 L509.0 286.8 L506.1 288.1 L503.4 288.7 L500.7 288.8 L497.9 288.1 L495.2 287.2 L492.9 285.7 L490.6 284.5 L488.1 284.1 L486.0 283.1 L484.8 281.6 L483.9 280.2 L483.0 278.5 L482.4 276.7 L482.2 274.8 L481.9 273.3 L481.4 272.2 L480.9 271.3 L481.0 269.9 L482.5 268.8 L484.6 267.6 L486.9 266.0 L484.9 267.3 L482.9 268.5 L480.9 269.8" fill="none" stroke="#444" stroke-width="1.0" stroke-linejoin="round" stroke-linecap="round"/><path d="M441.2 161.0 L442.1 162.3 L442.9 164.4 L443.7 166.5 L444.6 168.2 L446.1 168.5 L447.6 167.9 L449.0 167.1 L449.6 166.2 L449.7 165.0 L449.5 163.4 L448.4 162.1 L448.1 161.0" fill="none" stroke="#444" stroke-width="1.0" stroke-linejoin="round" stroke-linecap="round"/></g><path d="M122.2 27.4 L137.7 40.0" fill="none" stroke="#555" stroke-width="0.7" stroke-linejoin="round" stroke-linecap="round"/><path d="M262.9 23.8 L200.6 31.0" fill="none" stroke="#555" stroke-width="0.7" stroke-linejoin="round" stroke-linecap="round"/><path d="M107.8 70.5 L141.3 54.3" fill="none" stroke="#555" stroke-width="0.7" stroke-linejoin="round" stroke-linecap="round"/><path d="M83.7 186.4 L154.6 164.1" fill="none" stroke="#555" stroke-width="0.7" stroke-linejoin="round" stroke-linecap="round"/><path d="M423.6 198.2 L414.7 209.0" fill="none" stroke="#555" stroke-width="0.7" stroke-linejoin="round" stroke-linecap="round"/><path d="M262.5 88.5 L261.7 85.9 L260.7 82.2 L259.5 78.1 L258.5 74.1 L257.9 70.5 L257.4 66.8 L256.9 63.2 L256.4 59.7 L255.8 56.5 L255.3 53.4 L254.5 50.5 L253.5 47.9 L252.1 45.7 L250.4 43.8 L248.5 42.1 L246.3 40.7 L243.8 39.5 L241.0 38.5 L238.0 37.7 L234.8 37.1 L231.4 36.7 L227.8 36.6 L224.1 36.5 L220.4 36.4 L216.8 35.9 L213.1 35.3 L209.5 34.8 L206.0 34.6 L202.7 34.7 L199.4 35.1 L196.3 35.7 L193.4 36.4 L191.0 37.0 L188.8 37.7 L186.7 38.6 L184.4 40.0 L182.0 42.0 L179.6 44.7 L177.0 47.2 L174.4 48.9 L171.6 49.6 L168.7 49.4 L165.7 49.1 L162.9 48.9 L160.1 49.1 L157.4 49.3 L154.7 49.6 L152.1 50.0 L148.9 50.4 L145.5 50.8 L142.7 51.4 L141.3 52.5 L141.8 54.3 L143.7 56.5 L146.2 59.0 L148.5 61.5 L150.3 64.1 L152.1 66.9 L153.9 69.8 L155.7 73.1 L157.5 76.7 L159.4 80.7 L161.2 84.8 L162.9 88.5 L164.5 91.9 L166.1 95.1 L167.5 98.2 L168.3 101.1 L168.4 104.0 L168.1 106.7 L167.5 109.4 L166.5 111.9 L164.9 114.4 L163.0 116.7 L160.9 118.9 L159.3 120.9 L157.9 122.5 L156.6 123.7 L155.7 124.9 L155.7 126.3 L156.5 128.0 L158.1 129.8 L160.3 131.6 L162.9 133.5 L166.0 135.3 L169.7 137.1 L173.6 138.9 L177.2 140.7 L180.7 142.5 L184.1 144.3 L187.2 146.1 L189.8 147.9 L191.7 149.7 L193.1 151.5 L194.2 153.3 L195.2 155.1 L196.4 156.7 L197.4 158.3 L198.3 160.0 L198.8 162.3 L199.0 165.4 L198.8 169.3 L198.4 173.0 L197.7 175.9 L196.6 177.8 L195.0 178.9 L193.4 179.7 L192.4 180.2" fill="none" stroke="#111" stroke-width="1.6" stroke-linejoin="round" stroke-linecap="round"/><path d="M192.4 180.2 L190.8 179.0 L188.5 177.3 L186.1 175.2 L184.4 173.1 L183.8 170.6 L183.8 167.7 L183.8 165.1 L183.4 163.0 L182.4 161.7 L181.1 161.0 L179.5 160.6 L177.2 160.1 L174.1 159.3 L170.2 158.5 L166.2 158.0 L162.9 157.9 L160.1 158.6 L157.7 159.9 L155.9 161.4 L154.9 163.0 L154.9 164.5 L155.7 166.1 L157.2 168.0 L159.3 170.2 L162.1 172.9 L165.8 176.0 L169.8 179.2 L173.6 182.0 L177.2 184.6 L180.6 187.1 L184.2 189.2 L188.0 191.0 L192.4 192.4 L197.0 193.5 L201.7 194.2 L206.0 194.6 L209.9 194.6 L213.4 194.3 L216.9 193.7 L220.4 192.8 L223.7 191.9 L226.7 190.9 L230.2 189.5 L234.8 187.4 L241.2 184.3 L249.0 180.4 L256.8 176.4 L263.6 173.1 L268.7 170.4 L272.9 168.2 L276.9 166.3 L281.6 164.8 L287.6 163.5 L294.4 162.6 L300.6 162.0 L304.9 161.5" fill="none" stroke="#111" stroke-width="1.6" stroke-linejoin="round" stroke-linecap="round"/><path d="M304.9 161.5 L303.2 162.9 L300.7 164.8 L298.0 167.2 L295.9 170.2 L294.5 173.9 L293.4 178.4 L292.6 183.1 L292.4 187.4 L292.7 191.4 L293.5 195.2 L294.6 198.9 L295.9 202.5 L297.2 206.2 L298.6 209.8 L300.5 213.2 L303.1 216.2 L306.8 218.5 L311.2 220.4 L316.1 222.1 L321.1 224.1 L326.3 226.7 L331.7 229.6 L337.2 232.4 L342.7 234.9 L348.3 236.9 L354.1 238.7 L359.5 240.3 L364.3 242.1 L367.5 243.7 L369.6 245.2 L372.2 247.2 L376.9 250.4 L384.6 255.3 L394.3 261.4 L404.7 268.0 L414.7 274.5 L423.8 280.7 L432.8 287.1 L441.7 293.4 L450.6 299.7 L460.5 306.4 L470.9 313.5 L480.1 319.8 L486.6 324.1" fill="none" stroke="#111" stroke-width="1.6" stroke-linejoin="round" stroke-linecap="round"/><path d="M605.3 177.4 L599.3 177.3 L590.6 177.1 L581.5 177.0 L574.2 177.4 L569.7 178.6 L566.6 180.3 L563.9 181.9 L560.4 182.6 L555.8 181.9 L550.8 180.4 L545.4 178.6 L539.7 177.4 L533.5 177.0 L526.9 177.0 L520.2 177.0 L513.7 176.5 L507.3 175.6 L500.9 174.2 L494.8 172.8 L489.6 171.4 L484.9 170.2 L480.7 169.1 L477.5 167.8 L475.7 166.2 L476.4 163.9 L479.0 161.2 L481.7 158.3 L483.0 155.8 L482.6 153.6 L481.4 151.5 L479.2 149.6 L475.8 147.9 L470.5 146.4 L463.5 145.1 L456.4 143.8 L450.6 142.5 L447.0 141.0 L444.6 139.5 L442.3 137.9 L438.8 136.0 L433.9 134.0 L428.2 131.8 L421.8 129.2 L414.7 126.3 L406.5 122.6 L397.4 118.4 L388.0 114.0 L378.7 110.1 L369.7 106.6 L360.7 103.4 L351.7 100.3 L342.7 97.5 L333.7 94.9 L324.7 92.4 L315.7 90.2 L306.7 88.5 L297.1 87.3 L287.0 86.5 L277.8 86.1 L270.8 86.0 L266.6 86.3 L264.4 87.1 L263.3 87.9 L262.5 88.5" fill="none" stroke="#111" stroke-width="1.6" stroke-linejoin="round" stroke-linecap="round"/><path d="M612.2 199.0 L611.2 203.0 L609.6 208.6 L608.1 215.1 L607.0 221.5 L606.5 227.7 L606.3 234.2 L606.4 240.8 L607.0 247.4 L608.5 253.9 L610.6 260.5 L612.6 267.0 L613.9 273.3 L614.2 279.4 L613.8 285.4 L613.1 290.9 L612.2 295.7 L611.2 299.4 L609.8 302.2 L608.4 304.8 L607.0 307.8 L605.6 311.8 L604.1 316.4 L602.8 320.5 L601.8 323.4" fill="none" stroke="#111" stroke-width="1.6" stroke-linejoin="round" stroke-linecap="round"/><path d="M6.5 0 L-5 -4.5 L-2.8 0 L-5 4.5 Z" fill="#111" transform="translate(254.6 50.7) rotate(-100)"/><path d="M6.5 0 L-5 -4.5 L-2.8 0 L-5 4.5 Z" fill="#111" transform="translate(195.2 36.4) rotate(185)"/><path d="M6.5 0 L-5 -4.5 L-2.8 0 L-5 4.5 Z" fill="#111" transform="translate(162.9 87.4) rotate(70)"/><path d="M6.5 0 L-5 -4.5 L-2.8 0 L-5 4.5 Z" fill="#111" transform="translate(216.8 193.9) rotate(0)"/><path d="M6.5 0 L-5 -4.5 L-2.8 0 L-5 4.5 Z" fill="#111" transform="translate(376.9 250.4) rotate(35)"/><path d="M6.5 0 L-5 -4.5 L-2.8 0 L-5 4.5 Z" fill="#111" transform="translate(452.4 300.7) rotate(35)"/><path d="M6.5 0 L-5 -4.5 L-2.8 0 L-5 4.5 Z" fill="#111" transform="translate(574.2 177.9) rotate(182)"/><path d="M6.5 0 L-5 -4.5 L-2.8 0 L-5 4.5 Z" fill="#111" transform="translate(450.6 142.5) rotate(185)"/><path d="M6.5 0 L-5 -4.5 L-2.8 0 L-5 4.5 Z" fill="#111" transform="translate(270.8 86.0) rotate(182)"/><path d="M6.5 0 L-5 -4.5 L-2.8 0 L-5 4.5 Z" fill="#111" transform="translate(607.9 308.7) rotate(-100)"/><rect x="11.8" y="9.4" width="110.4" height="25.9" fill="#fff" stroke="#333" stroke-width="0.9"/><text x="15.3" y="17.4" font-size="7.4" font-weight="700" letter-spacing="0.05" fill="#222">17,1 (ноябрь 50 г.–январь 51 г.)</text><text x="15.3" y="24.8" font-size="7.4" font-weight="400" letter-spacing="0.12" fill="#222">Проповедовал в синагоге три</text><text x="15.3" y="32.2" font-size="7.4" font-weight="400" letter-spacing="0.12" fill="#222">субботы. Был вынужден уйти</text><rect x="262.9" y="9.4" width="143.9" height="33.1" fill="#fff" stroke="#333" stroke-width="0.9"/><text x="266.4" y="17.4" font-size="7.4" font-weight="700" letter-spacing="0.05" fill="#222">16,12–46 (август–октябрь 50 г.)</text><text x="266.4" y="24.8" font-size="7.4" font-weight="400" letter-spacing="0.12" fill="#222">Обращение Лидии. Прорицательница,</text><text x="266.4" y="32.2" font-size="7.4" font-weight="400" letter-spacing="0.12" fill="#222">одержимая нечистым духом. Павел</text><text x="266.4" y="39.6" font-size="7.4" font-weight="400" letter-spacing="0.12" fill="#222">заключен в темницу. Освобожден Богом</text><rect x="11.8" y="63.3" width="96.0" height="25.9" fill="#fff" stroke="#333" stroke-width="0.9"/><text x="15.3" y="71.3" font-size="7.4" font-weight="700" letter-spacing="0.05" fill="#222">17,10–15 (февраль 51 г.)</text><text x="15.3" y="78.7" font-size="7.4" font-weight="400" letter-spacing="0.12" fill="#222">Многие уверовали. Иудеи</text><text x="15.3" y="86.1" font-size="7.4" font-weight="400" letter-spacing="0.12" fill="#222">вынуждают Павла уйти</text><rect x="280.8" y="65.1" width="113.3" height="17.3" fill="#fff" stroke="#333" stroke-width="0.9"/><text x="284.3" y="73.1" font-size="7.4" font-weight="700" letter-spacing="0.05" fill="#222">16,8 (июль 50 г.)</text><text x="284.3" y="80.5" font-size="7.4" font-weight="400" letter-spacing="0.12" fill="#222">В видении явился македонянин</text><rect x="379.8" y="90.3" width="87.8" height="33.1" fill="#fff" stroke="#333" stroke-width="0.9"/><text x="383.3" y="98.3" font-size="7.4" font-weight="700" letter-spacing="0.05" fill="#222">16,4 (июль 50 г.)</text><text x="383.3" y="105.7" font-size="7.4" font-weight="400" letter-spacing="0.12" fill="#222">Призывал соблюдать</text><text x="383.3" y="113.1" font-size="7.4" font-weight="400" letter-spacing="0.12" fill="#222">постановления Иеруса-</text><text x="383.3" y="120.5" font-size="7.4" font-weight="400" letter-spacing="0.12" fill="#222">лимского собора</text><rect x="490.2" y="113.7" width="87.4" height="33.1" fill="#fff" stroke="#333" stroke-width="0.9"/><text x="493.7" y="121.7" font-size="7.4" font-weight="700" letter-spacing="0.05" fill="#222">16,4 (июнь/июль 50 г.)</text><text x="493.7" y="129.1" font-size="7.4" font-weight="400" letter-spacing="0.12" fill="#222">Призывал соблюдать</text><text x="493.7" y="136.5" font-size="7.4" font-weight="400" letter-spacing="0.12" fill="#222">постановления Иеруса-</text><text x="493.7" y="143.9" font-size="7.4" font-weight="400" letter-spacing="0.12" fill="#222">лимского собора</text><rect x="11.8" y="136.4" width="106.1" height="24.8" fill="#fff" stroke="#333" stroke-width="0.9"/><text x="15.3" y="144.4" font-size="7.4" font-weight="700" letter-spacing="0.05" fill="#222">17,16–34 (февраль/март 51 г.)</text><text x="15.3" y="151.8" font-size="7.4" font-weight="400" letter-spacing="0.12" fill="#222">Павел проповедовал о</text><text x="15.3" y="159.2" font-size="7.4" font-weight="400" letter-spacing="0.12" fill="#222">“неведомом Боге”</text><rect x="311.4" y="169.5" width="89.9" height="18.7" fill="#fff" stroke="#333" stroke-width="0.9"/><text x="314.9" y="177.5" font-size="7.4" font-weight="700" letter-spacing="0.05" fill="#222">18,19–21 (сентябрь 52 г.)</text><text x="314.9" y="184.9" font-size="7.4" font-weight="400" letter-spacing="0.12" fill="#222">Рассуждения в синагоге</text><rect x="423.6" y="182.8" width="64.7" height="26.3" fill="#fff" stroke="#333" stroke-width="0.9"/><text x="427.1" y="190.8" font-size="7.4" font-weight="700" letter-spacing="0.05" fill="#222">16,1–3 (май 50 г.)</text><text x="427.1" y="198.2" font-size="7.4" font-weight="400" letter-spacing="0.12" fill="#222">Павел встретил</text><text x="427.1" y="205.6" font-size="7.4" font-weight="400" letter-spacing="0.12" fill="#222">Тимофея</text><rect x="596.3" y="179.2" width="75.5" height="19.1" fill="#fff" stroke="#333" stroke-width="0.9"/><text x="599.8" y="187.2" font-size="7.4" font-weight="700" letter-spacing="0.05" fill="#222">15,40 (апрель 50 г.)</text><text x="599.8" y="194.6" font-size="7.4" font-weight="400" letter-spacing="0.12" fill="#222">Вышел из Антиохии</text><rect x="598.8" y="228.8" width="73.0" height="18.7" fill="#fff" stroke="#333" stroke-width="0.9"/><text x="602.3" y="236.8" font-size="7.4" font-weight="700" letter-spacing="0.05" fill="#222">18,22 (ноябрь 52 г.)</text><text x="602.3" y="244.2" font-size="7.4" font-weight="400" letter-spacing="0.12" fill="#222">Ободрял верующих</text><rect x="11.8" y="186.4" width="121.6" height="76.6" fill="#fff" stroke="#333" stroke-width="0.9"/><text x="15.3" y="194.4" font-size="7.4" font-weight="700" letter-spacing="0.05" fill="#222">18,1–18 (март 51 г.–сентябрь 52 г.)</text><text x="15.3" y="201.6" font-size="7.4" font-weight="400" letter-spacing="0.12" fill="#222">Павел проповедовал в синагоге.</text><text x="15.3" y="208.9" font-size="7.4" font-weight="400" letter-spacing="0.12" fill="#222">Противление иудеев. Павел</text><text x="15.3" y="216.1" font-size="7.4" font-weight="400" letter-spacing="0.12" fill="#222">обращается к язычникам.</text><text x="15.3" y="223.4" font-size="7.4" font-weight="400" letter-spacing="0.12" fill="#222">Галлион признал его</text><text x="15.3" y="230.6" font-size="7.4" font-weight="400" letter-spacing="0.12" fill="#222">невиновным.</text><text x="15.3" y="237.9" font-size="7.4" font-weight="400" letter-spacing="0.12" fill="#222">Написал 1 Фессалоникийцам</text><text x="15.3" y="245.1" font-size="7.4" font-weight="400" letter-spacing="0.12" fill="#222">(начало лета 51 г.)</text><text x="15.3" y="252.4" font-size="7.4" font-weight="400" letter-spacing="0.12" fill="#222">Написал 2 Фессалоникийцам</text><text x="15.3" y="259.6" font-size="7.4" font-weight="400" letter-spacing="0.12" fill="#222">(лето 51 г.)</text><text x="186.2" y="24.8" font-size="8.5" font-weight="400" fill="#1a1a1a">Филиппы</text><circle cx="200.6" cy="31.0" r="1.6" fill="#111"/><text x="135.9" y="35.6" font-size="8.5" font-weight="400" fill="#1a1a1a">Аполлония</text><circle cx="176.2" cy="40.7" r="1.6" fill="#111"/><text x="106.0" y="44.6" font-size="8.5" font-weight="400" fill="#1a1a1a">Фессалоника</text><circle cx="162.9" cy="44.3" r="1.6" fill="#111"/><text x="201.3" y="49.3" font-size="8.5" font-weight="400" fill="#1a1a1a">Неаполь</text><circle cx="215.0" cy="35.6" r="1.6" fill="#111"/><text x="111.4" y="57.2" font-size="8.5" font-weight="400" fill="#1a1a1a">Верия</text><circle cx="141.3" cy="53.6" r="1.6" fill="#111"/><text x="231.2" y="91.4" font-size="8.5" font-weight="400" fill="#1a1a1a">Троада</text><circle cx="262.5" cy="88.5" r="1.6" fill="#111"/><text x="194.2" y="111.9" font-size="10" font-weight="700" fill="#1a1a1a">Эгейское</text><text x="205.3" y="122.7" font-size="10" font-weight="700" fill="#1a1a1a">море</text><text x="105.3" y="125.9" font-size="10" font-weight="700" fill="#1a1a1a">Ахаия</text><text x="312.9" y="119.8" font-size="10" font-weight="700" fill="#1a1a1a">Асия</text><text x="430.1" y="132.0" font-size="8.5" font-weight="400" fill="#1a1a1a">Антиохия</text><circle cx="438.8" cy="136.0" r="1.6" fill="#111"/><text x="489.1" y="157.6" font-size="8.5" font-weight="400" fill="#1a1a1a">Икония</text><circle cx="483.0" cy="155.8" r="1.6" fill="#111"/><text x="455.3" y="177.4" font-size="8.5" font-weight="400" fill="#1a1a1a">Листра</text><circle cx="474.0" cy="167.7" r="1.6" fill="#111"/><text x="532.3" y="176.6" font-size="8.5" font-weight="400" fill="#1a1a1a">Дервия</text><circle cx="515.4" cy="178.4" r="1.6" fill="#111"/><circle cx="559.6" cy="186.4" r="1.6" fill="#111"/><text x="311.4" y="165.1" font-size="8.5" font-weight="400" fill="#1a1a1a">Ефес</text><circle cx="304.9" cy="161.5" r="1.6" fill="#111"/><text x="189.8" y="165.1" font-size="8.5" font-weight="400" fill="#1a1a1a">Афины</text><circle cx="183.4" cy="162.3" r="1.6" fill="#111"/><text x="119.0" y="170.5" font-size="8.5" font-weight="400" fill="#1a1a1a">Коринф</text><circle cx="154.6" cy="163.3" r="1.6" fill="#111"/><text x="132.3" y="180.6" font-size="8.5" font-weight="400" fill="#1a1a1a">Кенхрея</text><circle cx="156.7" cy="173.1" r="1.6" fill="#111"/><text x="610.7" y="216.2" font-size="8.5" font-weight="400" fill="#1a1a1a">Антиохия</text><circle cx="605.3" cy="213.3" r="1.6" fill="#111"/><text x="211.4" y="285.3" font-size="10" font-weight="700" font-style="italic" fill="#1a1a1a" transform="rotate(8 211.4 285.3)">о. Крит</text><text x="495.6" y="278.1" font-size="10" font-weight="700" font-style="italic" fill="#1a1a1a" transform="rotate(-28 495.6 278.1)">о. Кипр</text><text x="630.5" y="274.5" font-size="10" font-weight="700" fill="#1a1a1a">Сирия</text><text x="103.5" y="325.9" font-size="10" font-weight="700" fill="#1a1a1a">Средиземное море</text></svg></div><div class="t" style="position:absolute;left:133.50px;top:20.82px;font-size:17px;line-height:18.99px;color:#d6d1c9;font-weight:400;letter-spacing:-0.371px;white-space:pre;">Teleios Bible</div><div class="t" style="position:absolute;left:331.00px;top:24.23px;font-size:14px;line-height:15.64px;color:#b9b5ae;font-weight:400;letter-spacing:0.408px;white-space:pre;">Библиотека</div><div class="t" style="position:absolute;left:474.20px;top:24.23px;font-size:14px;line-height:15.64px;color:#b9b5ae;font-weight:400;letter-spacing:0.576px;white-space:pre;">Поиск</div><div class="t" style="position:absolute;left:578.60px;top:24.23px;font-size:14px;line-height:15.64px;color:#b9b5ae;font-weight:400;letter-spacing:0.747px;white-space:pre;">Гиды</div><div class="t" style="position:absolute;left:676.90px;top:24.23px;font-size:14px;line-height:15.64px;color:#b9b5ae;font-weight:400;letter-spacing:0.130px;white-space:pre;">Инструменты</div><div class="t" style="position:absolute;left:42.90px;top:69.83px;font-size:14px;line-height:15.64px;color:#d6d1c9;font-weight:400;letter-spacing:0.464px;white-space:pre;">Библиотека</div><div class="t" style="position:absolute;left:208.50px;top:70.23px;font-size:14px;line-height:15.64px;color:#4ba6ea;font-weight:400;letter-spacing:-0.042px;white-space:pre;">НРПН</div><div class="t" style="position:absolute;left:1031.50px;top:69.63px;font-size:14px;line-height:15.64px;color:#a9a59f;font-weight:400;letter-spacing:0.753px;white-space:pre;">БКДХНЗ</div><div class="t" style="position:absolute;left:73.50px;top:137.53px;font-size:14px;line-height:15.64px;color:#d6d1c9;font-weight:400;letter-spacing:0.138px;white-space:pre;">Деяния 13:1</div><div class="t" style="position:absolute;left:421.00px;top:139.14px;font-size:12px;line-height:13.40px;color:#dcd7cf;font-weight:400;letter-spacing:-0.339px;white-space:pre;letter-spacing:-0.6px">Str.</div><div class="t" style="position:absolute;left:1066.90px;top:137.83px;font-size:14px;line-height:15.64px;color:#d6d1c9;font-weight:400;letter-spacing:0.270px;white-space:pre;">выбрать главу</div><div class="t" style="position:absolute;left:227.90px;top:183.51px;font-size:18px;line-height:20.11px;color:#d6d1c9;font-weight:700;letter-spacing:0.108px;white-space:pre;">Варнава и Савл посланы на служение</div><div class="t" style="position:absolute;left:227.80px;top:446.71px;font-size:18px;line-height:20.11px;color:#d6d1c9;font-weight:700;letter-spacing:0.109px;white-space:pre;">Апостолы проповедуют на Кипре</div><div class="t" style="position:absolute;left:228.10px;top:229.54px;font-size:13px;line-height:14.52px;color:#8f8c88;font-weight:700;letter-spacing:0.000px;white-space:pre;">1</div><div class="t" style="position:absolute;left:237.50px;top:231.21px;font-size:18px;line-height:20.11px;color:#d6d1c9;font-weight:400;letter-spacing:0.217px;white-space:pre;-webkit-text-stroke:0.3px #d6d1c9">В церкви Антиохии были пророки и учители: Варнава, Симеон, называемый</div><div class="t" style="position:absolute;left:227.90px;top:263.21px;font-size:18px;line-height:20.11px;color:#d6d1c9;font-weight:400;letter-spacing:0.200px;white-space:pre;-webkit-text-stroke:0.3px #d6d1c9">Нигер,</div><div class="t" style="position:absolute;left:283.50px;top:261.69px;font-size:12.5px;line-height:13.96px;color:#cdc8c0;font-weight:400;letter-spacing:0.000px;white-space:pre;">a</div><div class="t" style="position:absolute;left:295.80px;top:263.21px;font-size:18px;line-height:20.11px;color:#d6d1c9;font-weight:400;letter-spacing:0.192px;white-space:pre;-webkit-text-stroke:0.3px #d6d1c9">киренец Луций, Манаин, получивший воспитание вместе с правителем</div><div class="t" style="position:absolute;left:227.90px;top:295.21px;font-size:18px;line-height:20.11px;color:#d6d1c9;font-weight:400;letter-spacing:0.052px;white-space:pre;-webkit-text-stroke:0.3px #d6d1c9">Иродом, и Савл.</div><div class="t" style="position:absolute;left:228.10px;top:325.54px;font-size:13px;line-height:14.52px;color:#8f8c88;font-weight:700;letter-spacing:0.000px;white-space:pre;">2</div><div class="t" style="position:absolute;left:237.50px;top:327.21px;font-size:18px;line-height:20.11px;color:#d6d1c9;font-weight:400;letter-spacing:0.257px;white-space:pre;-webkit-text-stroke:0.3px #d6d1c9">Однажды, когда они служили Господу и постились, Святой Дух сказал: —</div><div class="t" style="position:absolute;left:227.90px;top:359.21px;font-size:18px;line-height:20.11px;color:#d6d1c9;font-weight:400;letter-spacing:0.200px;white-space:pre;-webkit-text-stroke:0.3px #d6d1c9">Отделите мне Варнаву и Савла для дела, к которому Я их призвал.</div><div class="t" style="position:absolute;left:228.10px;top:391.54px;font-size:13px;line-height:14.52px;color:#8f8c88;font-weight:700;letter-spacing:0.000px;white-space:pre;">3</div><div class="t" style="position:absolute;left:237.50px;top:393.21px;font-size:18px;line-height:20.11px;color:#d6d1c9;font-weight:400;letter-spacing:0.242px;white-space:pre;-webkit-text-stroke:0.3px #d6d1c9">И они после поста и молитвы возложили на них руки и отпустили их.</div><div class="t" style="position:absolute;left:228.10px;top:491.54px;font-size:13px;line-height:14.52px;color:#8f8c88;font-weight:700;letter-spacing:0.000px;white-space:pre;">4</div><div class="t" style="position:absolute;left:237.50px;top:493.21px;font-size:18px;line-height:20.11px;color:#d6d1c9;font-weight:400;letter-spacing:0.184px;white-space:pre;-webkit-text-stroke:0.3px #d6d1c9">Эти два апостола, посланные Святым Духом, пошли в Селевкию, а оттуда</div><div class="t" style="position:absolute;left:227.90px;top:526.21px;font-size:18px;line-height:20.11px;color:#d6d1c9;font-weight:400;letter-spacing:0.223px;white-space:pre;-webkit-text-stroke:0.3px #d6d1c9">отплыли на Кипр.</div><div class="t" style="position:absolute;left:228.10px;top:556.53px;font-size:13px;line-height:14.52px;color:#8f8c88;font-weight:700;letter-spacing:0.000px;white-space:pre;">5</div><div class="t" style="position:absolute;left:237.50px;top:558.21px;font-size:18px;line-height:20.11px;color:#d6d1c9;font-weight:400;letter-spacing:0.198px;white-space:pre;-webkit-text-stroke:0.3px #d6d1c9">Они прибыли в Саламин и там возвещали слово Божье в иудейских синагогах.</div><div class="t" style="position:absolute;left:227.90px;top:590.21px;font-size:18px;line-height:20.11px;color:#d6d1c9;font-weight:400;letter-spacing:0.200px;white-space:pre;-webkit-text-stroke:0.3px #d6d1c9">Иоанн тоже был с ними и помогал им.</div><div class="t" style="position:absolute;left:228.10px;top:621.53px;font-size:13px;line-height:14.52px;color:#8f8c88;font-weight:700;letter-spacing:0.000px;white-space:pre;">6</div><div class="t" style="position:absolute;left:237.50px;top:623.21px;font-size:18px;line-height:20.11px;color:#d6d1c9;font-weight:400;letter-spacing:0.175px;white-space:pre;-webkit-text-stroke:0.3px #d6d1c9">Они прошли весь остров и пришли в Пафос. Там они встретили одного иудея по</div><div class="t" style="position:absolute;left:227.90px;top:655.21px;font-size:18px;line-height:20.11px;color:#d6d1c9;font-weight:400;letter-spacing:0.203px;white-space:pre;-webkit-text-stroke:0.3px #d6d1c9">имени Вар-Иисус, который был колдуном и лжепророком.</div><div class="t" style="position:absolute;left:228.10px;top:686.53px;font-size:13px;line-height:14.52px;color:#8f8c88;font-weight:700;letter-spacing:0.000px;white-space:pre;">7</div><div class="t" style="position:absolute;left:237.50px;top:688.21px;font-size:18px;line-height:20.11px;color:#d6d1c9;font-weight:400;letter-spacing:0.110px;white-space:pre;-webkit-text-stroke:0.3px #d6d1c9">Он был с римским проконсулом Сергием Павлом, человеком большого ума.</div><div class="t" style="position:absolute;left:227.90px;top:720.21px;font-size:18px;line-height:20.11px;color:#d6d1c9;font-weight:400;letter-spacing:0.160px;white-space:pre;-webkit-text-stroke:0.3px #d6d1c9">Проконсул пригласил Варнаву и Савла, желая услышать слово Божье.</div><div class="t" style="position:absolute;left:228.10px;top:750.53px;font-size:13px;line-height:14.52px;color:#8f8c88;font-weight:700;letter-spacing:0.000px;white-space:pre;">8</div><div class="t" style="position:absolute;left:237.50px;top:752.21px;font-size:18px;line-height:20.11px;color:#d6d1c9;font-weight:400;letter-spacing:0.313px;white-space:pre;-webkit-text-stroke:0.3px #d6d1c9">Но колдун, которого также звали Елима (что значит «чародей»), действовал</div><div class="t" style="position:absolute;left:227.90px;top:785.21px;font-size:18px;line-height:20.11px;color:#d6d1c9;font-weight:400;letter-spacing:0.230px;white-space:pre;-webkit-text-stroke:0.3px #d6d1c9">против них и пытался отвратить проконсула от веры.</div><div class="t" style="position:absolute;left:228.10px;top:815.53px;font-size:13px;line-height:14.52px;color:#8f8c88;font-weight:700;letter-spacing:0.000px;white-space:pre;">9</div><div class="t" style="position:absolute;left:237.50px;top:817.21px;font-size:18px;line-height:20.11px;color:#d6d1c9;font-weight:400;letter-spacing:0.203px;white-space:pre;-webkit-text-stroke:0.3px #d6d1c9">Тогда Савл, он же Павел, исполнившись Святого Духа, посмотрел прямо на</div><div class="t" style="position:absolute;left:227.90px;top:850.21px;font-size:18px;line-height:20.11px;color:#d6d1c9;font-weight:400;letter-spacing:0.200px;white-space:pre;-webkit-text-stroke:0.3px #d6d1c9">Елиму</div><div class="t" style="position:absolute;left:228.10px;top:880.53px;font-size:13px;line-height:14.52px;color:#8f8c88;font-weight:700;letter-spacing:-0.969px;white-space:pre;">10</div><div class="t" style="position:absolute;left:244.50px;top:882.21px;font-size:18px;line-height:20.11px;color:#d6d1c9;font-weight:400;letter-spacing:0.253px;white-space:pre;-webkit-text-stroke:0.3px #d6d1c9">и сказал: — Сын дьявола, враг всякой праведности, полный лжи и нечестия!</div><div class="t" style="position:absolute;left:227.90px;top:914.21px;font-size:18px;line-height:20.11px;color:#d6d1c9;font-weight:400;letter-spacing:0.255px;white-space:pre;-webkit-text-stroke:0.3px #d6d1c9">Неужели ты никогда не перестанешь искривлять прямые пути Господни?</div><div class="t" style="position:absolute;left:228.10px;top:945.53px;font-size:13px;line-height:14.52px;color:#8f8c88;font-weight:700;letter-spacing:-0.250px;white-space:pre;">11</div><div class="t" style="position:absolute;left:244.50px;top:947.21px;font-size:18px;line-height:20.11px;color:#d6d1c9;font-weight:400;letter-spacing:0.217px;white-space:pre;-webkit-text-stroke:0.3px #d6d1c9">Рука Господа обращена против тебя, ты будешь поражен слепотой и некоторое</div><div class="t" style="position:absolute;left:227.90px;top:979.21px;font-size:18px;line-height:20.11px;color:#d6d1c9;font-weight:400;letter-spacing:0.211px;white-space:pre;-webkit-text-stroke:0.3px #d6d1c9">время не будешь видеть солнечного света. И сразу же его окутали мрак и тьма, и</div><div class="t" style="position:absolute;left:227.90px;top:1012.21px;font-size:18px;line-height:20.11px;color:#d6d1c9;font-weight:400;letter-spacing:0.258px;white-space:pre;-webkit-text-stroke:0.3px #d6d1c9">он стал метаться из стороны в сторону, ища кого-либо, кто бы повел его за руку.</div><div class="t" style="position:absolute;left:228.10px;top:1042.53px;font-size:13px;line-height:14.52px;color:#8f8c88;font-weight:700;letter-spacing:-0.969px;white-space:pre;">12</div><div class="t" style="position:absolute;left:244.50px;top:1044.21px;font-size:18px;line-height:20.11px;color:#d6d1c9;font-weight:400;letter-spacing:0.191px;white-space:pre;-webkit-text-stroke:0.3px #d6d1c9">Когда проконсул увидел, что произошло, он уверовал, изумленный учением о</div><div class="t" style="position:absolute;left:227.90px;top:1076.21px;font-size:18px;line-height:20.11px;color:#d6d1c9;font-weight:400;letter-spacing:0.209px;white-space:pre;-webkit-text-stroke:0.3px #d6d1c9">Господе.</div><div class="t" style="position:absolute;left:1222.00px;top:183.99px;font-size:22px;line-height:24.57px;color:#d6d1c9;font-weight:400;letter-spacing:-0.463px;white-space:pre;">ПЕРВОЕ МИССИОНЕРСКОЕ ПУТЕШЕСТВИЕ ПАВЛА</div><div class="t" style="position:absolute;left:1222.00px;top:747.09px;font-size:22px;line-height:24.57px;color:#d6d1c9;font-weight:400;letter-spacing:-0.405px;white-space:pre;">ВТОРОЕ МИССИОНЕРСКОЕ ПУТЕШЕСТВИЕ ПАВЛА</div>
</body></html>
